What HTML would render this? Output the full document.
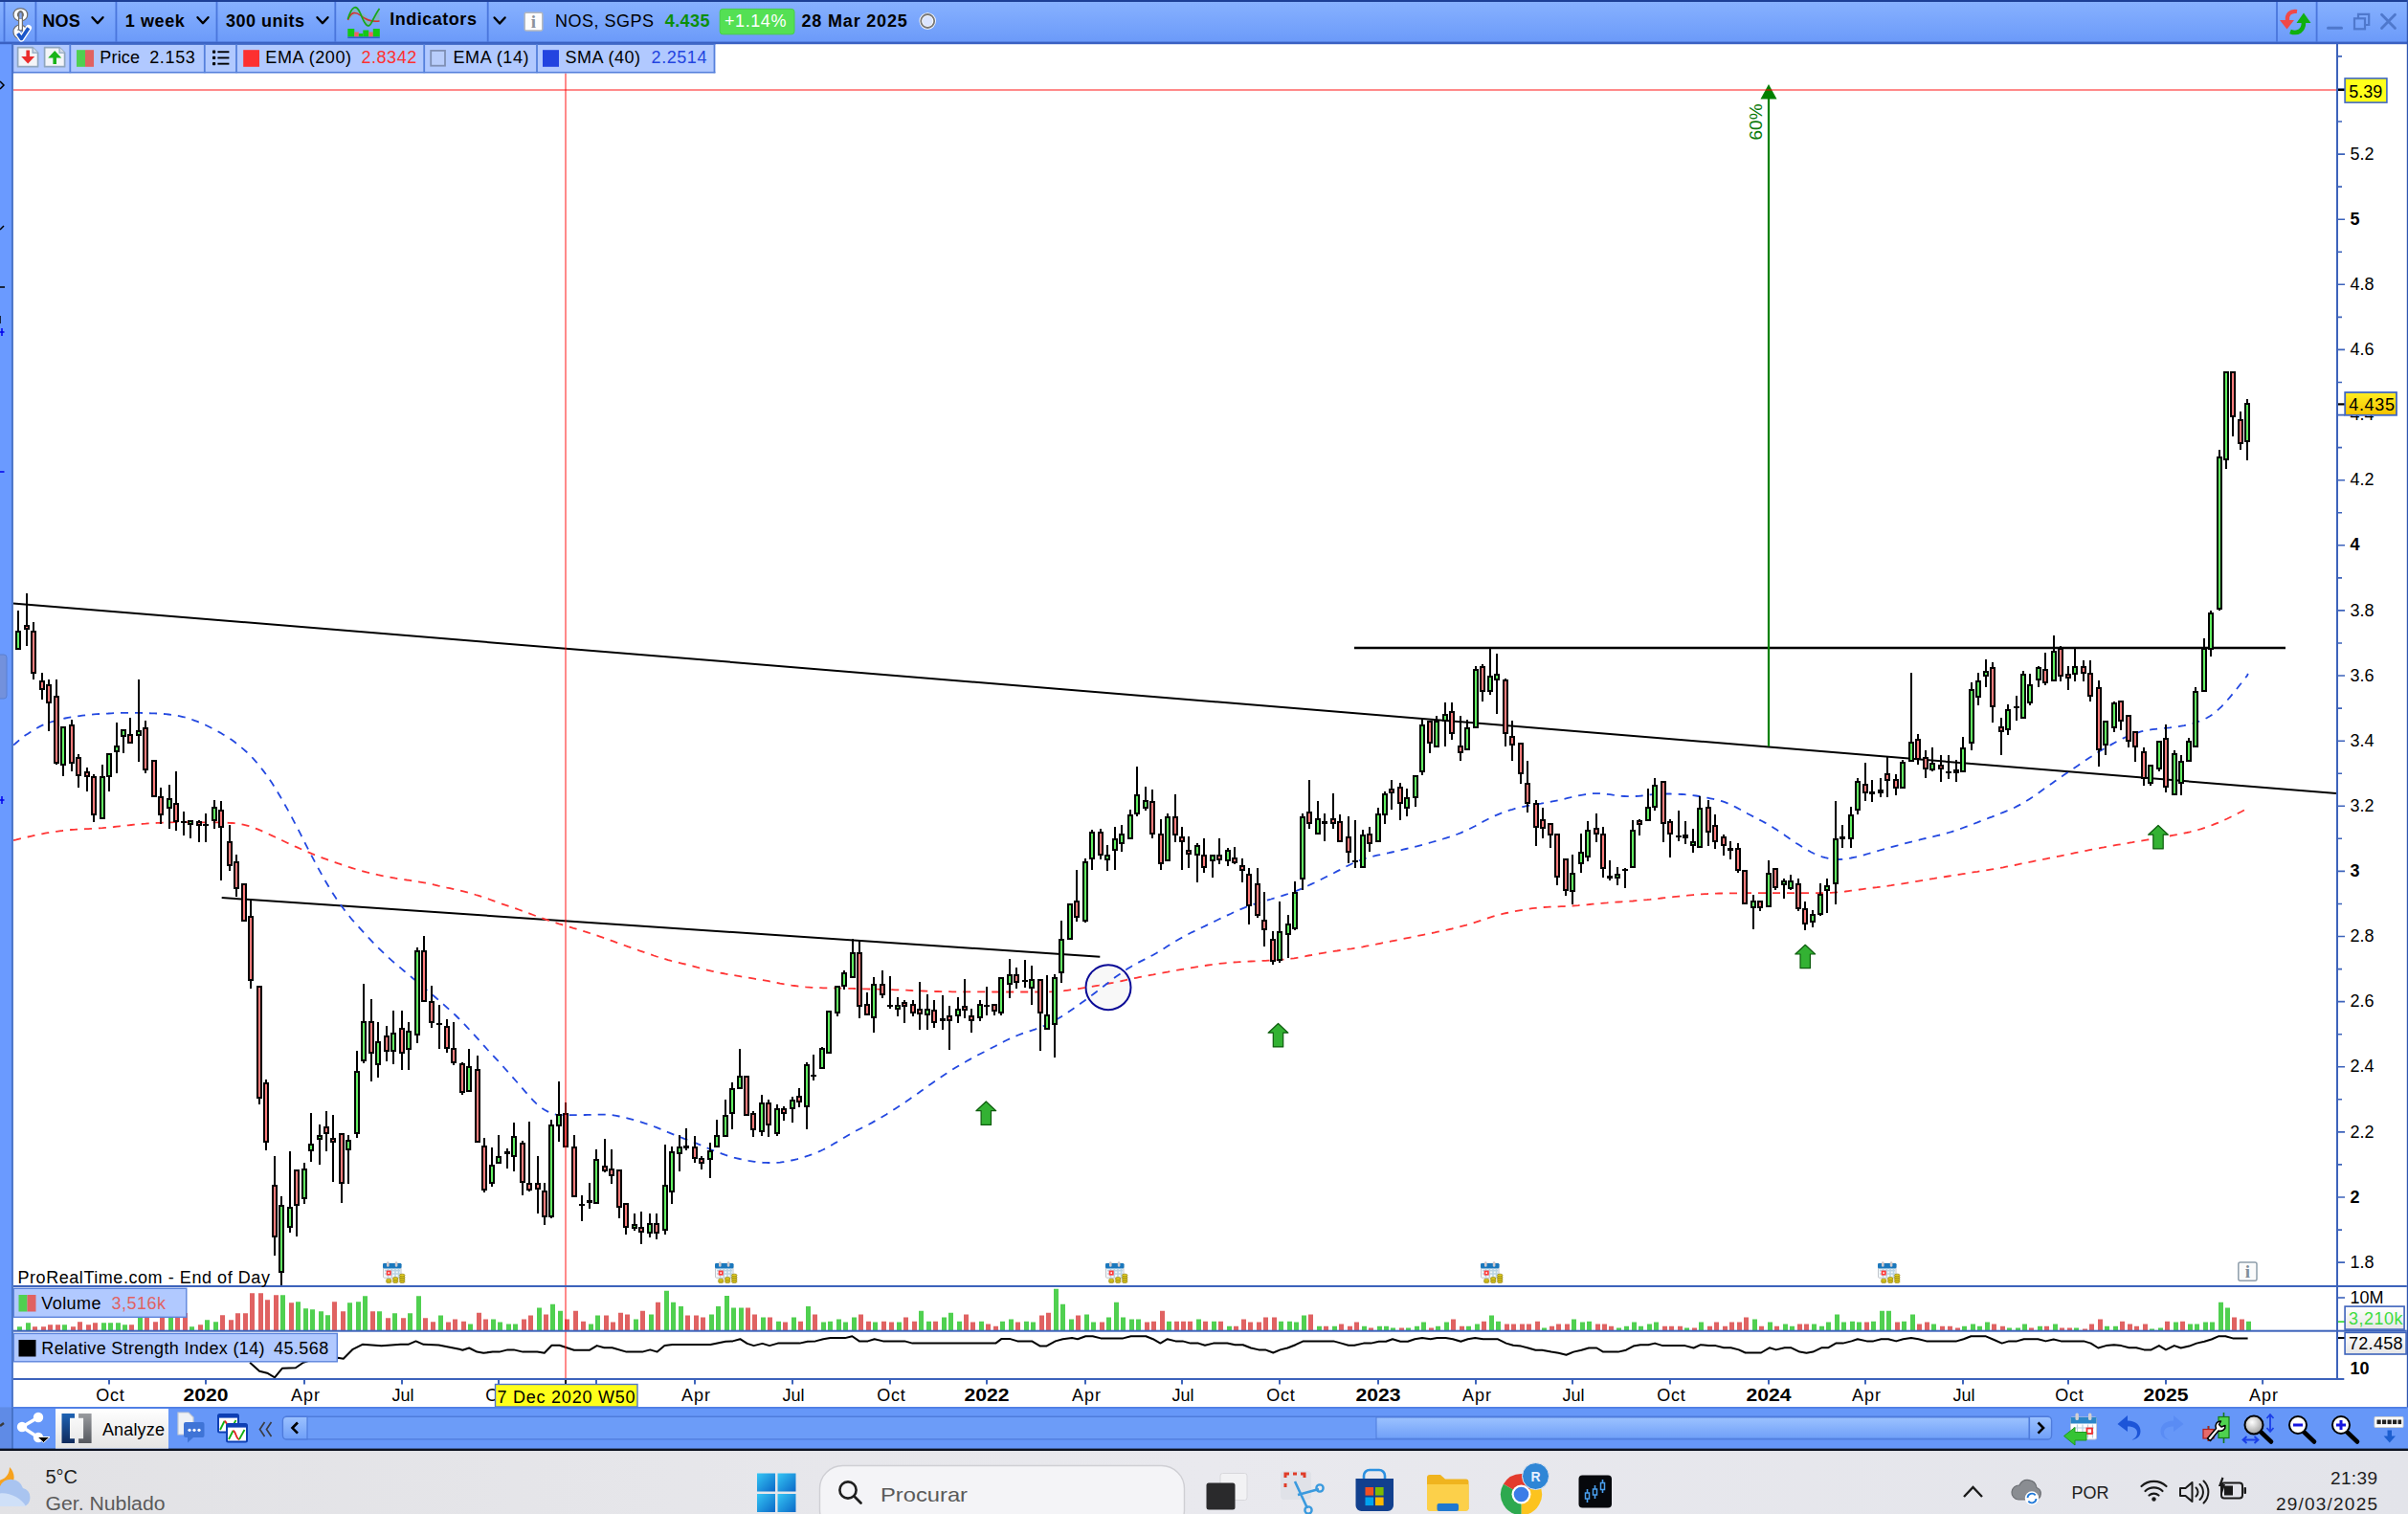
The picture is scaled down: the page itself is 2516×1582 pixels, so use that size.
<!DOCTYPE html>
<html><head><meta charset="utf-8"><title>NOS, SGPS - 1 week</title>
<style>html,body{margin:0;padding:0;background:#fff;overflow:hidden}svg{display:block}</style></head>
<body><svg width="2516" height="1582" viewBox="0 0 2516 1582">
<rect x="0" y="0" width="2516" height="1582" fill="#ffffff"/>
<defs>
<clipPath id="cpPrice"><rect x="13.8" y="46" width="2427.2" height="1297"/></clipPath>
<clipPath id="cpRsi"><rect x="13.8" y="1391.7" width="2427.2" height="48.3"/></clipPath>
<linearGradient id="gTop" x1="0" y1="0" x2="0" y2="1"><stop offset="0" stop-color="#88b2ff"/><stop offset="1" stop-color="#6a99f9"/></linearGradient>
<linearGradient id="gBtn" x1="0" y1="0" x2="0" y2="1"><stop offset="0" stop-color="#ffffff"/><stop offset="1" stop-color="#e4e4e4"/></linearGradient>
<linearGradient id="gLbl" x1="0" y1="0" x2="0" y2="1"><stop offset="0" stop-color="#ffffff"/><stop offset="1" stop-color="#e6e6e6"/></linearGradient>
<linearGradient id="gScroll" x1="0" y1="0" x2="0" y2="1"><stop offset="0" stop-color="#9cc2ff"/><stop offset="1" stop-color="#6f9ff8"/></linearGradient>
<linearGradient id="gTask" x1="0" y1="0" x2="1" y2="0"><stop offset="0" stop-color="#e2e2e5"/><stop offset="0.5" stop-color="#e9e9ee"/><stop offset="1" stop-color="#e3e4ea"/></linearGradient>
</defs>
<g clip-path="url(#cpPrice)">
<line x1="13.5" y1="630.4" x2="2442" y2="829.2" stroke="#000" stroke-width="2"/>
<line x1="231.7" y1="938.1" x2="1149.3" y2="999.8" stroke="#000" stroke-width="2"/>
<line x1="1415" y1="677" x2="2388" y2="677" stroke="#000" stroke-width="2.4"/>
<circle cx="1158" cy="1031.7" r="23.5" fill="#f8f8f8" fill-opacity="1" stroke="#0a0a96" stroke-width="2"/>
<polyline points="14.1,878.1 17.1,877.4 20.1,876.6 23.1,875.9 26.1,875.2 29.1,874.5 32.1,873.8 35.1,873.1 38.1,872.5 41.1,871.9 44.1,871.3 47.1,870.7 50.1,870.2 53.1,869.7 56.1,869.2 59.1,868.8 62.1,868.3 65.1,868.0 68.1,867.6 71.1,867.3 74.1,867.0 77.1,866.8 80.1,866.6 83.1,866.4 86.1,866.3 89.1,866.2 92.1,866.1 95.1,865.9 98.1,865.8 101.1,865.6 104.1,865.4 107.1,865.2 110.1,864.9 113.1,864.6 116.1,864.3 119.1,864.0 122.1,863.6 125.1,863.3 128.1,863.0 131.1,862.6 134.1,862.3 137.1,862.0 140.1,861.7 143.1,861.4 146.1,861.1 149.1,860.9 152.1,860.7 155.1,860.4 158.1,860.2 161.1,860.1 164.1,859.9 167.1,859.8 170.1,859.6 173.1,859.5 176.1,859.4 179.1,859.3 182.1,859.2 185.1,859.2 188.1,859.2 191.1,859.1 194.1,859.1 197.1,859.1 200.1,859.1 203.1,859.2 206.1,859.2 209.1,859.2 212.1,859.3 215.1,859.3 218.1,859.3 221.1,859.3 224.1,859.4 227.1,859.4 230.1,859.5 233.1,859.5 236.1,859.7 239.1,859.8 242.1,860.0 245.1,860.2 248.1,860.6 251.1,861.1 254.1,861.7 257.1,862.4 260.1,863.2 263.1,864.2 266.1,865.2 269.1,866.4 272.1,867.6 275.1,868.9 278.1,870.3 281.1,871.7 284.1,873.1 287.1,874.5 290.1,876.0 293.1,877.4 296.1,878.8 299.1,880.2 302.1,881.6 305.1,883.0 308.1,884.4 311.1,885.7 314.1,887.0 317.1,888.4 320.1,889.7 323.1,890.9 326.1,892.2 329.1,893.4 332.1,894.6 335.1,895.7 338.1,896.8 341.1,897.9 344.1,899.0 347.1,900.1 350.1,901.1 353.1,902.2 356.1,903.2 359.1,904.2 362.1,905.2 365.1,906.2 368.1,907.1 371.1,908.0 374.1,908.9 377.1,909.8 380.1,910.6 383.1,911.4 386.1,912.1 389.1,912.8 392.1,913.5 395.1,914.2 398.1,914.8 401.1,915.4 404.1,916.0 407.1,916.6 410.1,917.1 413.1,917.7 416.1,918.2 419.1,918.6 422.1,919.0 425.1,919.5 428.1,919.9 431.1,920.4 434.1,920.9 437.1,921.3 440.1,921.8 443.1,922.3 446.1,922.9 449.1,923.5 452.1,924.2 455.1,924.9 458.1,925.6 461.1,926.2 464.1,926.9 467.1,927.6 470.1,928.2 473.1,928.9 476.1,929.6 479.1,930.2 482.1,930.9 485.1,931.6 488.1,932.4 491.1,933.2 494.1,934.0 497.1,935.0 500.1,935.9 503.1,936.9 506.1,937.9 509.1,938.9 512.1,940.0 515.1,941.1 518.1,942.2 521.1,943.2 524.1,944.3 527.1,945.3 530.1,946.3 533.1,947.3 536.1,948.4 539.1,949.4 542.1,950.5 545.1,951.6 548.1,952.7 551.1,953.8 554.1,954.9 557.1,956.0 560.1,957.1 563.1,958.2 566.1,959.3 569.1,960.4 572.1,961.4 575.1,962.4 578.1,963.4 581.1,964.3 584.1,965.3 587.1,966.2 590.1,967.1 593.1,968.0 596.1,968.9 599.1,969.8 602.1,970.6 605.1,971.5 608.1,972.4 611.1,973.4 614.1,974.3 617.1,975.3 620.1,976.3 623.1,977.3 626.1,978.3 629.1,979.3 632.1,980.4 635.1,981.5 638.1,982.6 641.1,983.7 644.1,984.8 647.1,985.9 650.1,987.0 653.1,988.0 656.1,989.1 659.1,990.1 662.1,991.2 665.1,992.2 668.1,993.3 671.1,994.3 674.1,995.4 677.1,996.4 680.1,997.4 683.1,998.5 686.1,999.5 689.1,1000.4 692.1,1001.3 695.1,1002.2 698.1,1003.1 701.1,1003.9 704.1,1004.6 707.1,1005.4 710.1,1006.1 713.1,1006.8 716.1,1007.5 719.1,1008.2 722.1,1009.0 725.1,1009.8 728.1,1010.7 731.1,1011.5 734.1,1012.3 737.1,1013.1 740.1,1013.9 743.1,1014.6 746.1,1015.3 749.1,1015.9 752.1,1016.5 755.1,1017.0 758.1,1017.6 761.1,1018.1 764.1,1018.6 767.1,1019.2 770.1,1019.7 773.1,1020.2 776.1,1020.7 779.1,1021.2 782.1,1021.7 785.1,1022.2 788.1,1022.7 791.1,1023.2 794.1,1023.7 797.1,1024.2 800.1,1024.7 803.1,1025.2 806.1,1025.8 809.1,1026.4 812.1,1027.0 815.1,1027.6 818.1,1028.1 821.1,1028.6 824.1,1029.1 827.1,1029.6 830.1,1030.0 833.1,1030.4 836.1,1030.8 839.1,1031.1 842.1,1031.4 845.1,1031.6 848.1,1031.8 851.1,1032.0 854.1,1032.1 857.1,1032.2 860.1,1032.3 863.1,1032.4 866.1,1032.4 869.1,1032.5 872.1,1032.5 875.1,1032.6 878.1,1032.6 881.1,1032.7 884.1,1032.8 887.1,1032.8 890.1,1032.9 893.1,1033.0 896.1,1033.1 899.1,1033.2 902.1,1033.3 905.1,1033.4 908.1,1033.5 911.1,1033.5 914.1,1033.6 917.1,1033.7 920.1,1033.8 923.1,1033.9 926.1,1034.0 929.1,1034.1 932.1,1034.2 935.1,1034.3 938.1,1034.4 941.1,1034.5 944.1,1034.6 947.1,1034.7 950.1,1034.8 953.1,1035.0 956.1,1035.1 959.1,1035.2 962.1,1035.4 965.1,1035.5 968.1,1035.6 971.1,1035.8 974.1,1035.9 977.1,1036.0 980.1,1036.0 983.1,1036.1 986.1,1036.2 989.1,1036.2 992.1,1036.2 995.1,1036.3 998.1,1036.3 1001.1,1036.3 1004.1,1036.3 1007.1,1036.3 1010.1,1036.3 1013.1,1036.4 1016.1,1036.4 1019.1,1036.4 1022.1,1036.4 1025.1,1036.4 1028.1,1036.4 1031.1,1036.4 1034.1,1036.4 1037.1,1036.5 1040.1,1036.5 1043.1,1036.5 1046.1,1036.5 1049.1,1036.5 1052.1,1036.5 1055.1,1036.5 1058.1,1036.5 1061.1,1036.5 1064.1,1036.5 1067.1,1036.5 1070.1,1036.5 1073.1,1036.5 1076.1,1036.5 1079.1,1036.5 1082.1,1036.5 1085.1,1036.5 1088.1,1036.5 1091.1,1036.5 1094.1,1036.4 1097.1,1036.3 1100.1,1036.2 1103.1,1036.0 1106.1,1035.7 1109.1,1035.5 1112.1,1035.2 1115.1,1034.8 1118.1,1034.4 1121.1,1034.0 1124.1,1033.5 1127.1,1033.1 1130.1,1032.6 1133.1,1032.1 1136.1,1031.6 1139.1,1031.1 1142.1,1030.6 1145.1,1030.1 1148.1,1029.6 1151.1,1029.0 1154.1,1028.5 1157.1,1027.9 1160.1,1027.3 1163.1,1026.8 1166.1,1026.2 1169.1,1025.6 1172.1,1025.0 1175.1,1024.3 1178.1,1023.7 1181.1,1023.1 1184.1,1022.4 1187.1,1021.8 1190.1,1021.2 1193.1,1020.6 1196.1,1020.0 1199.1,1019.4 1202.1,1018.8 1205.1,1018.3 1208.1,1017.7 1211.1,1017.2 1214.1,1016.6 1217.1,1016.1 1220.1,1015.6 1223.1,1015.0 1226.1,1014.5 1229.1,1014.0 1232.1,1013.4 1235.1,1012.9 1238.1,1012.4 1241.1,1011.9 1244.1,1011.4 1247.1,1010.9 1250.1,1010.4 1253.1,1009.9 1256.1,1009.4 1259.1,1009.0 1262.1,1008.5 1265.1,1008.1 1268.1,1007.7 1271.1,1007.3 1274.1,1006.9 1277.1,1006.6 1280.1,1006.3 1283.1,1006.0 1286.1,1005.7 1289.1,1005.5 1292.1,1005.3 1295.1,1005.1 1298.1,1005.0 1301.1,1004.8 1304.1,1004.7 1307.1,1004.5 1310.1,1004.4 1313.1,1004.2 1316.1,1004.1 1319.1,1003.9 1322.1,1003.8 1325.1,1003.6 1328.1,1003.5 1331.1,1003.3 1334.1,1003.2 1337.1,1003.0 1340.1,1002.7 1343.1,1002.4 1346.1,1002.1 1349.1,1001.7 1352.1,1001.3 1355.1,1000.8 1358.1,1000.3 1361.1,999.8 1364.1,999.2 1367.1,998.5 1370.1,998.0 1373.1,997.4 1376.1,996.8 1379.1,996.3 1382.1,995.8 1385.1,995.3 1388.1,994.8 1391.1,994.3 1394.1,993.9 1397.1,993.5 1400.1,993.0 1403.1,992.6 1406.1,992.2 1409.1,991.7 1412.1,991.3 1415.1,990.8 1418.1,990.3 1421.1,989.8 1424.1,989.3 1427.1,988.7 1430.1,988.2 1433.1,987.6 1436.1,987.0 1439.1,986.4 1442.1,985.8 1445.1,985.2 1448.1,984.6 1451.1,984.0 1454.1,983.4 1457.1,982.8 1460.1,982.2 1463.1,981.6 1466.1,981.0 1469.1,980.4 1472.1,979.8 1475.1,979.2 1478.1,978.6 1481.1,978.0 1484.1,977.4 1487.1,976.8 1490.1,976.2 1493.1,975.6 1496.1,975.0 1499.1,974.4 1502.1,973.7 1505.1,973.1 1508.1,972.4 1511.1,971.8 1514.1,971.1 1517.1,970.5 1520.1,969.8 1523.1,969.0 1526.1,968.2 1529.1,967.4 1532.1,966.6 1535.1,965.7 1538.1,964.8 1541.1,963.8 1544.1,962.8 1547.1,961.8 1550.1,960.8 1553.1,959.8 1556.1,958.8 1559.1,957.9 1562.1,957.0 1565.1,956.2 1568.1,955.4 1571.1,954.7 1574.1,954.0 1577.1,953.3 1580.1,952.7 1583.1,952.1 1586.1,951.6 1589.1,951.1 1592.1,950.6 1595.1,950.1 1598.1,949.6 1601.1,949.2 1604.1,948.9 1607.1,948.6 1610.1,948.3 1613.1,948.0 1616.1,947.8 1619.1,947.7 1622.1,947.6 1625.1,947.5 1628.1,947.3 1631.1,947.2 1634.1,947.1 1637.1,946.9 1640.1,946.7 1643.1,946.5 1646.1,946.3 1649.1,946.1 1652.1,945.8 1655.1,945.5 1658.1,945.3 1661.1,945.0 1664.1,944.7 1667.1,944.4 1670.1,944.1 1673.1,943.9 1676.1,943.6 1679.1,943.4 1682.1,943.1 1685.1,942.9 1688.1,942.7 1691.1,942.5 1694.1,942.3 1697.1,942.1 1700.1,941.9 1703.1,941.7 1706.1,941.5 1709.1,941.2 1712.1,941.0 1715.1,940.7 1718.1,940.4 1721.1,940.2 1724.1,939.9 1727.1,939.5 1730.1,939.2 1733.1,938.9 1736.1,938.5 1739.1,938.2 1742.1,937.9 1745.1,937.5 1748.1,937.2 1751.1,936.9 1754.1,936.6 1757.1,936.3 1760.1,936.0 1763.1,935.7 1766.1,935.4 1769.1,935.1 1772.1,934.8 1775.1,934.6 1778.1,934.3 1781.1,934.1 1784.1,934.0 1787.1,933.8 1790.1,933.7 1793.1,933.6 1796.1,933.5 1799.1,933.5 1802.1,933.4 1805.1,933.4 1808.1,933.3 1811.1,933.3 1814.1,933.3 1817.1,933.3 1820.1,933.2 1823.1,933.2 1826.1,933.2 1829.1,933.2 1832.1,933.2 1835.1,933.2 1838.1,933.2 1841.1,933.2 1844.1,933.2 1847.1,933.2 1850.1,933.2 1853.1,933.2 1856.1,933.2 1859.1,933.2 1862.1,933.2 1865.1,933.2 1868.1,933.2 1871.1,933.2 1874.1,933.2 1877.1,933.2 1880.1,933.2 1883.1,933.2 1886.1,933.2 1889.1,933.2 1892.1,933.2 1895.1,933.2 1898.1,933.2 1901.1,933.2 1904.1,933.2 1907.1,933.1 1910.1,933.0 1913.1,932.8 1916.1,932.6 1919.1,932.4 1922.1,932.1 1925.1,931.8 1928.1,931.5 1931.1,931.1 1934.1,930.7 1937.1,930.3 1940.1,929.9 1943.1,929.5 1946.1,929.1 1949.1,928.7 1952.1,928.3 1955.1,927.9 1958.1,927.5 1961.1,927.2 1964.1,926.8 1967.1,926.4 1970.1,926.0 1973.1,925.6 1976.1,925.2 1979.1,924.7 1982.1,924.3 1985.1,923.8 1988.1,923.3 1991.1,922.8 1994.1,922.3 1997.1,921.8 2000.1,921.3 2003.1,920.8 2006.1,920.3 2009.1,919.8 2012.1,919.3 2015.1,918.8 2018.1,918.3 2021.1,917.9 2024.1,917.4 2027.1,916.9 2030.1,916.5 2033.1,916.0 2036.1,915.5 2039.1,915.0 2042.1,914.6 2045.1,914.1 2048.1,913.6 2051.1,913.1 2054.1,912.7 2057.1,912.2 2060.1,911.7 2063.1,911.2 2066.1,910.8 2069.1,910.3 2072.1,909.8 2075.1,909.4 2078.1,908.9 2081.1,908.4 2084.1,907.9 2087.1,907.3 2090.1,906.8 2093.1,906.3 2096.1,905.7 2099.1,905.1 2102.1,904.5 2105.1,904.0 2108.1,903.3 2111.1,902.7 2114.1,902.1 2117.1,901.5 2120.1,900.9 2123.1,900.3 2126.1,899.7 2129.1,899.1 2132.1,898.5 2135.1,897.9 2138.1,897.3 2141.1,896.7 2144.1,896.1 2147.1,895.5 2150.1,894.9 2153.1,894.3 2156.1,893.7 2159.1,893.0 2162.1,892.4 2165.1,891.8 2168.1,891.2 2171.1,890.6 2174.1,890.0 2177.1,889.4 2180.1,888.8 2183.1,888.2 2186.1,887.6 2189.1,887.1 2192.1,886.5 2195.1,885.9 2198.1,885.4 2201.1,884.8 2204.1,884.3 2207.1,883.8 2210.1,883.2 2213.1,882.7 2216.1,882.2 2219.1,881.7 2222.1,881.2 2225.1,880.7 2228.1,880.2 2231.1,879.6 2234.1,879.1 2237.1,878.6 2240.1,878.1 2243.1,877.6 2246.1,877.1 2249.1,876.6 2252.1,876.0 2255.1,875.5 2258.1,875.0 2261.1,874.5 2264.1,874.0 2267.1,873.5 2270.1,872.9 2273.1,872.4 2276.1,871.9 2279.1,871.3 2282.1,870.6 2285.1,870.0 2288.1,869.3 2291.1,868.5 2294.1,867.8 2297.1,867.0 2300.1,866.1 2303.1,865.1 2306.1,864.1 2309.1,863.0 2312.1,861.9 2315.1,860.7 2318.1,859.5 2321.1,858.2 2324.1,856.9 2327.1,855.5 2330.1,854.0 2333.1,852.5 2336.1,851.0 2339.1,849.5 2342.1,848.0 2345.1,846.4 2348.1,844.8 2348.8,843.9" fill="none" stroke="#ff3535" stroke-width="1.8" stroke-dasharray="8 7"/>
<polyline points="14.1,778.6 17.1,776.0 20.1,773.4 23.1,770.8 26.1,768.5 29.1,766.7 32.1,764.7 35.1,762.8 38.1,761.0 41.1,759.4 44.1,757.9 47.1,756.6 50.1,755.5 53.1,754.5 56.1,753.6 59.1,752.7 62.1,751.9 65.1,751.2 68.1,750.5 71.1,749.9 74.1,749.4 77.1,748.9 80.1,748.5 83.1,748.1 86.1,747.7 89.1,747.3 92.1,747.0 95.1,746.7 98.1,746.4 101.1,746.2 104.1,746.0 107.1,745.8 110.1,745.6 113.1,745.5 116.1,745.3 119.1,745.2 122.1,745.1 125.1,745.0 128.1,744.9 131.1,744.9 134.1,744.8 137.1,744.8 140.1,744.8 143.1,744.9 146.1,744.9 149.1,745.0 152.1,745.1 155.1,745.2 158.1,745.3 161.1,745.4 164.1,745.5 167.1,745.7 170.1,745.9 173.1,746.2 176.1,746.5 179.1,746.8 182.1,747.2 185.1,747.7 188.1,748.3 191.1,749.0 194.1,749.8 197.1,750.7 200.1,751.7 203.1,752.8 206.1,753.9 209.1,755.1 212.1,756.4 215.1,757.8 218.1,759.2 221.1,760.7 224.1,762.3 227.1,763.9 230.1,765.6 233.1,767.4 236.1,769.2 239.1,771.1 242.1,773.1 245.1,775.3 248.1,777.6 251.1,780.1 254.1,782.6 257.1,785.2 260.1,787.9 263.1,791.0 266.1,794.3 269.1,797.8 272.1,801.5 275.1,805.4 278.1,809.4 281.1,813.7 284.1,818.1 287.1,822.8 290.1,827.7 293.1,832.8 296.1,838.1 299.1,843.4 302.1,848.8 305.1,854.4 308.1,860.1 311.1,865.8 314.1,871.7 317.1,877.8 320.1,883.7 323.1,889.5 326.1,895.2 329.1,900.9 332.1,906.4 335.1,911.9 338.1,917.3 341.1,922.5 344.1,927.6 347.1,932.5 350.1,937.0 353.1,941.5 356.1,945.7 359.1,949.8 362.1,953.8 365.1,957.5 368.1,961.2 371.1,964.6 374.1,967.9 377.1,971.2 380.1,974.4 383.1,977.7 386.1,980.9 389.1,984.1 392.1,987.2 395.1,990.2 398.1,993.1 401.1,996.0 404.1,998.8 407.1,1001.6 410.1,1004.3 413.1,1006.9 416.1,1009.4 419.1,1011.9 422.1,1014.5 425.1,1017.0 428.1,1019.5 431.1,1022.0 434.1,1024.5 437.1,1027.1 440.1,1029.6 443.1,1032.1 446.1,1034.6 449.1,1037.2 452.1,1039.7 455.1,1042.3 458.1,1044.9 461.1,1047.5 464.1,1050.1 467.1,1052.8 470.1,1055.4 473.1,1058.2 476.1,1061.0 479.1,1064.0 482.1,1067.0 485.1,1070.1 488.1,1073.3 491.1,1076.5 494.1,1079.8 497.1,1083.1 500.1,1086.4 503.1,1089.8 506.1,1093.1 509.1,1096.5 512.1,1099.7 515.1,1103.0 518.1,1106.2 521.1,1109.4 524.1,1112.7 527.1,1116.0 530.1,1119.3 533.1,1122.7 536.1,1126.1 539.1,1129.5 542.1,1132.9 545.1,1136.4 548.1,1139.8 551.1,1143.3 554.1,1146.7 557.1,1149.9 560.1,1152.9 563.1,1155.5 566.1,1157.8 569.1,1159.8 572.1,1161.4 575.1,1162.8 578.1,1163.8 581.1,1164.6 584.1,1165.1 587.1,1165.2 590.1,1165.3 593.1,1165.3 596.1,1165.2 599.1,1165.2 602.1,1165.2 605.1,1165.1 608.1,1165.1 611.1,1165.0 614.1,1164.9 617.1,1164.9 620.1,1164.8 623.1,1164.7 626.1,1164.7 629.1,1164.7 632.1,1164.7 635.1,1164.8 638.1,1165.0 641.1,1165.4 644.1,1165.9 647.1,1166.5 650.1,1167.1 653.1,1167.8 656.1,1168.6 659.1,1169.4 662.1,1170.2 665.1,1171.1 668.1,1172.0 671.1,1172.9 674.1,1173.9 677.1,1174.8 680.1,1175.9 683.1,1177.0 686.1,1178.1 689.1,1179.3 692.1,1180.6 695.1,1181.9 698.1,1183.2 701.1,1184.4 704.1,1185.6 707.1,1186.8 710.1,1188.0 713.1,1189.1 716.1,1190.3 719.1,1191.4 722.1,1192.5 725.1,1193.7 728.1,1194.9 731.1,1196.1 734.1,1197.4 737.1,1198.7 740.1,1200.0 743.1,1201.3 746.1,1202.5 749.1,1203.6 752.1,1204.8 755.1,1205.8 758.1,1206.9 761.1,1207.8 764.1,1208.8 767.1,1209.6 770.1,1210.3 773.1,1211.0 776.1,1211.6 779.1,1212.2 782.1,1212.8 785.1,1213.3 788.1,1213.8 791.1,1214.2 794.1,1214.5 797.1,1214.8 800.1,1214.9 803.1,1215.0 806.1,1215.0 809.1,1214.9 812.1,1214.8 815.1,1214.6 818.1,1214.2 821.1,1213.8 824.1,1213.2 827.1,1212.5 830.1,1211.8 833.1,1211.1 836.1,1210.3 839.1,1209.4 842.1,1208.4 845.1,1207.4 848.1,1206.3 851.1,1205.2 854.1,1204.0 857.1,1202.7 860.1,1201.3 863.1,1199.8 866.1,1198.1 869.1,1196.4 872.1,1194.6 875.1,1192.9 878.1,1191.1 881.1,1189.3 884.1,1187.5 887.1,1185.7 890.1,1183.9 893.1,1182.3 896.1,1180.7 899.1,1179.2 902.1,1177.8 905.1,1176.2 908.1,1174.7 911.1,1173.1 914.1,1171.4 917.1,1169.7 920.1,1168.0 923.1,1166.2 926.1,1164.4 929.1,1162.5 932.1,1160.6 935.1,1158.7 938.1,1156.8 941.1,1154.8 944.1,1152.8 947.1,1150.8 950.1,1148.7 953.1,1146.6 956.1,1144.5 959.1,1142.4 962.1,1140.2 965.1,1138.1 968.1,1135.9 971.1,1133.8 974.1,1131.7 977.1,1129.6 980.1,1127.6 983.1,1125.5 986.1,1123.5 989.1,1121.6 992.1,1119.6 995.1,1117.7 998.1,1115.8 1001.1,1114.0 1004.1,1112.2 1007.1,1110.5 1010.1,1108.8 1013.1,1107.1 1016.1,1105.4 1019.1,1103.8 1022.1,1102.2 1025.1,1100.7 1028.1,1099.2 1031.1,1097.6 1034.1,1096.1 1037.1,1094.5 1040.1,1093.0 1043.1,1091.4 1046.1,1089.9 1049.1,1088.3 1052.1,1086.8 1055.1,1085.4 1058.1,1084.0 1061.1,1082.7 1064.1,1081.5 1067.1,1080.4 1070.1,1079.3 1073.1,1078.3 1076.1,1077.3 1079.1,1076.3 1082.1,1075.3 1085.1,1074.2 1088.1,1073.1 1091.1,1071.9 1094.1,1070.5 1097.1,1069.1 1100.1,1067.5 1103.1,1065.9 1106.1,1064.1 1109.1,1062.2 1112.1,1060.3 1115.1,1058.3 1118.1,1056.3 1121.1,1054.2 1124.1,1052.1 1127.1,1050.0 1130.1,1047.8 1133.1,1045.7 1136.1,1043.5 1139.1,1041.2 1142.1,1039.0 1145.1,1036.7 1148.1,1034.5 1151.1,1032.2 1154.1,1029.8 1157.1,1027.5 1160.1,1025.2 1163.1,1022.8 1166.1,1020.5 1169.1,1018.4 1172.1,1016.3 1175.1,1014.2 1178.1,1012.3 1181.1,1010.4 1184.1,1008.7 1187.1,1007.0 1190.1,1005.4 1193.1,1003.9 1196.1,1002.4 1199.1,1000.9 1202.1,999.3 1205.1,997.7 1208.1,996.0 1211.1,994.2 1214.1,992.3 1217.1,990.5 1220.1,988.6 1223.1,986.8 1226.1,984.9 1229.1,983.1 1232.1,981.3 1235.1,979.6 1238.1,978.0 1241.1,976.4 1244.1,974.8 1247.1,973.4 1250.1,971.9 1253.1,970.5 1256.1,969.0 1259.1,967.6 1262.1,966.1 1265.1,964.7 1268.1,963.2 1271.1,961.8 1274.1,960.3 1277.1,958.9 1280.1,957.5 1283.1,956.1 1286.1,954.7 1289.1,953.2 1292.1,951.9 1295.1,950.6 1298.1,949.3 1301.1,948.1 1304.1,947.0 1307.1,945.9 1310.1,944.8 1313.1,943.8 1316.1,942.9 1319.1,942.0 1322.1,941.2 1325.1,940.3 1328.1,939.5 1331.1,938.6 1334.1,937.8 1337.1,936.9 1340.1,935.9 1343.1,934.9 1346.1,933.9 1349.1,932.9 1352.1,931.8 1355.1,930.6 1358.1,929.4 1361.1,928.1 1364.1,926.7 1367.1,925.3 1370.1,923.9 1373.1,922.5 1376.1,921.0 1379.1,919.5 1382.1,918.0 1385.1,916.5 1388.1,915.0 1391.1,913.5 1394.1,912.0 1397.1,910.4 1400.1,908.9 1403.1,907.3 1406.1,905.7 1409.1,904.2 1412.1,902.7 1415.1,901.4 1418.1,900.1 1421.1,898.9 1424.1,897.8 1427.1,896.8 1430.1,895.9 1433.1,895.1 1436.1,894.3 1439.1,893.7 1442.1,893.1 1445.1,892.4 1448.1,891.8 1451.1,891.2 1454.1,890.5 1457.1,889.8 1460.1,889.1 1463.1,888.5 1466.1,887.7 1469.1,887.0 1472.1,886.3 1475.1,885.6 1478.1,884.8 1481.1,884.1 1484.1,883.3 1487.1,882.5 1490.1,881.7 1493.1,880.9 1496.1,880.0 1499.1,879.2 1502.1,878.3 1505.1,877.4 1508.1,876.5 1511.1,875.6 1514.1,874.7 1517.1,873.7 1520.1,872.6 1523.1,871.5 1526.1,870.3 1529.1,869.0 1532.1,867.7 1535.1,866.3 1538.1,864.8 1541.1,863.3 1544.1,861.7 1547.1,860.0 1550.1,858.3 1553.1,856.7 1556.1,855.2 1559.1,853.8 1562.1,852.4 1565.1,851.1 1568.1,849.9 1571.1,848.7 1574.1,847.6 1577.1,846.6 1580.1,845.8 1583.1,844.9 1586.1,844.2 1589.1,843.5 1592.1,842.8 1595.1,842.1 1598.1,841.6 1601.1,841.0 1604.1,840.5 1607.1,840.0 1610.1,839.6 1613.1,839.1 1616.1,838.6 1619.1,838.0 1622.1,837.4 1625.1,836.8 1628.1,836.2 1631.1,835.6 1634.1,834.9 1637.1,834.2 1640.1,833.5 1643.1,832.7 1646.1,832.0 1649.1,831.4 1652.1,830.8 1655.1,830.3 1658.1,829.8 1661.1,829.4 1664.1,829.2 1667.1,829.1 1670.1,829.1 1673.1,829.2 1676.1,829.4 1679.1,829.8 1682.1,830.2 1685.1,830.7 1688.1,831.1 1691.1,831.5 1694.1,831.8 1697.1,832.0 1700.1,832.2 1703.1,832.2 1706.1,832.2 1709.1,832.0 1712.1,831.8 1715.1,831.5 1718.1,831.1 1721.1,830.7 1724.1,830.4 1727.1,830.2 1730.1,830.0 1733.1,829.8 1736.1,829.7 1739.1,829.6 1742.1,829.5 1745.1,829.5 1748.1,829.6 1751.1,829.7 1754.1,829.8 1757.1,830.0 1760.1,830.2 1763.1,830.4 1766.1,830.8 1769.1,831.1 1772.1,831.5 1775.1,832.0 1778.1,832.5 1781.1,833.1 1784.1,833.7 1787.1,834.3 1790.1,834.9 1793.1,835.5 1796.1,836.3 1799.1,837.2 1802.1,838.2 1805.1,839.4 1808.1,840.8 1811.1,842.2 1814.1,843.6 1817.1,845.2 1820.1,846.8 1823.1,848.4 1826.1,850.2 1829.1,851.8 1832.1,853.4 1835.1,854.9 1838.1,856.5 1841.1,858.0 1844.1,859.6 1847.1,861.3 1850.1,863.0 1853.1,864.9 1856.1,866.8 1859.1,868.8 1862.1,870.8 1865.1,872.9 1868.1,875.1 1871.1,877.2 1874.1,879.2 1877.1,881.2 1880.1,883.1 1883.1,885.0 1886.1,886.8 1889.1,888.5 1892.1,890.2 1895.1,891.7 1898.1,893.1 1901.1,894.2 1904.1,895.3 1907.1,896.1 1910.1,896.8 1913.1,897.4 1916.1,897.8 1919.1,898.0 1922.1,898.0 1925.1,897.8 1928.1,897.5 1931.1,897.0 1934.1,896.5 1937.1,895.9 1940.1,895.3 1943.1,894.5 1946.1,893.7 1949.1,892.9 1952.1,892.0 1955.1,891.1 1958.1,890.2 1961.1,889.4 1964.1,888.5 1967.1,887.7 1970.1,886.8 1973.1,886.0 1976.1,885.2 1979.1,884.4 1982.1,883.6 1985.1,882.8 1988.1,882.0 1991.1,881.2 1994.1,880.4 1997.1,879.7 2000.1,878.9 2003.1,878.2 2006.1,877.4 2009.1,876.7 2012.1,876.0 2015.1,875.3 2018.1,874.6 2021.1,873.9 2024.1,873.2 2027.1,872.5 2030.1,871.7 2033.1,870.9 2036.1,870.0 2039.1,869.1 2042.1,868.1 2045.1,867.1 2048.1,866.1 2051.1,865.0 2054.1,863.9 2057.1,862.8 2060.1,861.6 2063.1,860.5 2066.1,859.4 2069.1,858.2 2072.1,857.1 2075.1,855.9 2078.1,854.7 2081.1,853.6 2084.1,852.4 2087.1,851.2 2090.1,850.0 2093.1,848.8 2096.1,847.6 2099.1,846.4 2102.1,845.1 2105.1,843.7 2108.1,842.1 2111.1,840.6 2114.1,838.9 2117.1,837.1 2120.1,835.2 2123.1,833.3 2126.1,831.3 2129.1,829.1 2132.1,827.0 2135.1,824.8 2138.1,822.7 2141.1,820.5 2144.1,818.4 2147.1,816.3 2150.1,814.2 2153.1,812.1 2156.1,810.1 2159.1,808.0 2162.1,806.0 2165.1,803.9 2168.1,801.9 2171.1,799.9 2174.1,797.8 2177.1,795.8 2180.1,793.8 2183.1,791.8 2186.1,789.9 2189.1,788.0 2192.1,786.1 2195.1,784.3 2198.1,782.5 2201.1,780.8 2204.1,779.1 2207.1,777.4 2210.1,775.7 2213.1,774.1 2216.1,772.5 2219.1,771.1 2222.1,769.7 2225.1,768.4 2228.1,767.3 2231.1,766.2 2234.1,765.3 2237.1,764.4 2240.1,763.7 2243.1,763.1 2246.1,762.6 2249.1,762.2 2252.1,761.8 2255.1,761.5 2258.1,761.2 2261.1,760.9 2264.1,760.6 2267.1,760.3 2270.1,759.9 2273.1,759.6 2276.1,759.1 2279.1,758.6 2282.1,758.1 2285.1,757.5 2288.1,756.8 2291.1,756.1 2294.1,755.1 2297.1,754.0 2300.1,752.8 2303.1,751.5 2306.1,750.0 2309.1,748.2 2312.1,746.2 2315.1,743.8 2318.1,741.2 2321.1,738.3 2324.1,735.2 2327.1,731.8 2330.1,728.3 2333.1,724.7 2336.1,721.1 2339.1,717.2 2342.1,713.4 2345.1,709.5 2348.1,705.9 2348.8,703.9" fill="none" stroke="#2348e0" stroke-width="1.8" stroke-dasharray="8 7"/>
<line x1="1848" y1="100" x2="1848" y2="780" stroke="#008000" stroke-width="2.2"/>
<polygon points="1848,88 1856.5,103.5 1839.5,103.5" fill="#008000"/>
<text transform="translate(1841,146.5) rotate(-90)" font-family='"Liberation Sans", Arial, sans-serif' font-size="19" fill="#0a7a0a">60%</text>
<g shape-rendering="crispEdges">
<path d="M18 638h2V679h-2zM27 620h2V675h-2zM34 650h2V710h-2zM43 703h2V731h-2zM50 710h2V764h-2zM58 710h2V799h-2zM65 759h2V811h-2zM74 752h2V806h-2zM81 788h2V823h-2zM90 802h2V827h-2zM97 809h2V859h-2zM106 799h2V856h-2zM113 787h2V827h-2zM121 755h2V808h-2zM128 762h2V787h-2zM135 750h2V777h-2zM144 710h2V796h-2zM151 753h2V808h-2zM167 823h2V861h-2zM176 820h2V866h-2zM183 806h2V868h-2zM191 848h2V873h-2zM198 857h2V876h-2zM207 857h2V880h-2zM214 850h2V880h-2zM223 836h2V866h-2zM230 837h2V920h-2zM239 862h2V910h-2zM246 893h2V937h-2zM261 940h2V1033h-2zM270 1030h2V1154h-2zM277 1128h2V1202h-2zM286 1208h2V1312h-2zM293 1250h2V1343h-2zM302 1203h2V1288h-2zM309 1222h2V1292h-2zM317 1215h2V1258h-2zM324 1163h2V1214h-2zM333 1175h2V1217h-2zM340 1161h2V1203h-2zM347 1165h2V1235h-2zM356 1184h2V1257h-2zM363 1186h2V1237h-2zM372 1098h2V1189h-2zM379 1028h2V1111h-2zM387 1044h2V1130h-2zM394 1068h2V1126h-2zM403 1072h2V1109h-2zM410 1056h2V1112h-2zM419 1056h2V1118h-2zM426 1068h2V1118h-2zM435 990h2V1090h-2zM442 978h2V1047h-2zM450 1030h2V1074h-2zM458 1050h2V1096h-2zM466 1065h2V1100h-2zM473 1068h2V1113h-2zM482 1110h2V1144h-2zM489 1096h2V1141h-2zM498 1103h2V1194h-2zM505 1189h2V1246h-2zM513 1199h2V1240h-2zM520 1186h2V1216h-2zM529 1200h2V1221h-2zM536 1173h2V1224h-2zM545 1192h2V1249h-2zM552 1172h2V1245h-2zM561 1208h2V1268h-2zM568 1236h2V1280h-2zM575 1170h2V1273h-2zM583 1130h2V1193h-2zM590 1152h2V1199h-2zM599 1186h2V1251h-2zM607 1249h2V1276h-2zM615 1236h2V1263h-2zM622 1201h2V1258h-2zM631 1190h2V1225h-2zM638 1201h2V1237h-2zM646 1222h2V1273h-2zM653 1257h2V1290h-2zM662 1268h2V1286h-2zM669 1266h2V1300h-2zM678 1268h2V1293h-2zM685 1268h2V1295h-2zM694 1196h2V1290h-2zM701 1198h2V1258h-2zM709 1186h2V1224h-2zM716 1179h2V1202h-2zM725 1187h2V1215h-2zM732 1208h2V1222h-2zM741 1194h2V1231h-2zM748 1170h2V1199h-2zM757 1149h2V1188h-2zM764 1131h2V1180h-2zM772 1096h2V1138h-2zM786 1161h2V1188h-2zM795 1144h2V1187h-2zM802 1149h2V1188h-2zM811 1154h2V1187h-2zM818 1156h2V1171h-2zM827 1146h2V1173h-2zM834 1137h2V1157h-2zM842 1110h2V1180h-2zM849 1102h2V1129h-2zM858 1094h2V1117h-2zM874 1030h2V1062h-2zM881 1014h2V1034h-2zM890 981h2V1022h-2zM897 983h2V1064h-2zM905 1037h2V1061h-2zM912 1021h2V1079h-2zM921 1014h2V1043h-2zM929 1020h2V1054h-2zM937 1042h2V1062h-2zM944 1045h2V1069h-2zM953 1045h2V1062h-2zM960 1026h2V1076h-2zM968 1039h2V1076h-2zM975 1045h2V1074h-2zM984 1040h2V1076h-2zM991 1051h2V1097h-2zM1000 1042h2V1069h-2zM1007 1023h2V1064h-2zM1014 1054h2V1079h-2zM1023 1045h2V1067h-2zM1030 1031h2V1061h-2zM1038 1049h2V1061h-2zM1045 1021h2V1061h-2zM1054 1002h2V1043h-2zM1061 1011h2V1033h-2zM1070 1003h2V1032h-2zM1077 1009h2V1050h-2zM1086 1023h2V1098h-2zM1093 1019h2V1076h-2zM1101 1018h2V1105h-2zM1108 962h2V1027h-2zM1124 909h2V963h-2zM1133 897h2V964h-2zM1140 867h2V909h-2zM1149 866h2V898h-2zM1156 883h2V910h-2zM1164 864h2V909h-2zM1171 862h2V890h-2zM1180 846h2V877h-2zM1187 801h2V853h-2zM1196 822h2V847h-2zM1203 825h2V876h-2zM1212 856h2V909h-2zM1219 850h2V900h-2zM1227 830h2V880h-2zM1234 864h2V909h-2zM1241 874h2V907h-2zM1250 881h2V922h-2zM1257 876h2V912h-2zM1266 893h2V917h-2zM1273 876h2V903h-2zM1282 886h2V905h-2zM1289 885h2V903h-2zM1297 897h2V922h-2zM1304 907h2V966h-2zM1313 907h2V959h-2zM1320 932h2V989h-2zM1329 973h2V1008h-2zM1336 942h2V1006h-2zM1345 956h2V1001h-2zM1352 921h2V972h-2zM1360 850h2V930h-2zM1367 815h2V866h-2zM1376 837h2V872h-2zM1383 850h2V879h-2zM1392 829h2V866h-2zM1399 851h2V880h-2zM1408 853h2V902h-2zM1415 857h2V907h-2zM1423 867h2V907h-2zM1430 864h2V890h-2zM1439 844h2V880h-2zM1446 827h2V861h-2zM1453 815h2V846h-2zM1462 818h2V857h-2zM1469 824h2V853h-2zM1478 810h2V843h-2zM1485 751h2V810h-2zM1493 753h2V787h-2zM1500 748h2V781h-2zM1509 734h2V780h-2zM1516 734h2V773h-2zM1525 748h2V795h-2zM1532 752h2V784h-2zM1541 696h2V761h-2zM1548 694h2V733h-2zM1556 677h2V726h-2zM1563 683h2V746h-2zM1572 709h2V780h-2zM1579 753h2V795h-2zM1588 776h2V819h-2zM1595 795h2V849h-2zM1604 836h2V884h-2zM1611 844h2V876h-2zM1619 860h2V886h-2zM1626 871h2V925h-2zM1635 897h2V936h-2zM1642 893h2V945h-2zM1651 871h2V912h-2zM1658 858h2V900h-2zM1667 850h2V880h-2zM1674 864h2V917h-2zM1681 899h2V920h-2zM1689 906h2V925h-2zM1697 907h2V928h-2zM1705 857h2V907h-2zM1712 856h2V873h-2zM1721 824h2V858h-2zM1728 813h2V847h-2zM1737 816h2V880h-2zM1744 856h2V896h-2zM1753 847h2V879h-2zM1760 858h2V882h-2zM1768 866h2V891h-2zM1775 832h2V886h-2zM1784 836h2V884h-2zM1791 851h2V887h-2zM1800 872h2V894h-2zM1807 879h2V898h-2zM1815 881h2V912h-2zM1831 935h2V971h-2zM1838 941h2V952h-2zM1847 899h2V948h-2zM1854 907h2V930h-2zM1863 918h2V939h-2zM1870 914h2V930h-2zM1878 918h2V952h-2zM1885 942h2V972h-2zM1893 951h2V969h-2zM1901 923h2V957h-2zM1908 918h2V954h-2zM1917 837h2V945h-2zM1924 862h2V886h-2zM1933 843h2V886h-2zM1940 813h2V851h-2zM1948 797h2V837h-2zM1955 815h2V838h-2zM1964 813h2V833h-2zM1971 791h2V833h-2zM1980 809h2V831h-2zM1987 794h2V824h-2zM1996 703h2V796h-2zM2003 767h2V799h-2zM2011 784h2V813h-2zM2018 781h2V806h-2zM2027 789h2V817h-2zM2035 789h2V814h-2zM2043 794h2V817h-2zM2050 770h2V807h-2zM2059 713h2V784h-2zM2066 703h2V737h-2zM2074 689h2V718h-2zM2081 692h2V755h-2zM2090 750h2V789h-2zM2097 736h2V768h-2zM2106 727h2V753h-2zM2113 701h2V751h-2zM2120 704h2V737h-2zM2129 696h2V718h-2zM2136 682h2V716h-2zM2145 664h2V712h-2zM2152 675h2V712h-2zM2160 696h2V721h-2zM2167 677h2V712h-2zM2176 690h2V712h-2zM2183 690h2V733h-2zM2192 711h2V801h-2zM2199 753h2V789h-2zM2208 733h2V765h-2zM2215 732h2V763h-2zM2223 747h2V781h-2zM2230 764h2V796h-2zM2239 781h2V821h-2zM2246 799h2V821h-2zM2255 774h2V806h-2zM2262 757h2V828h-2zM2271 784h2V831h-2zM2278 789h2V831h-2zM2286 771h2V796h-2zM2293 718h2V781h-2zM2302 667h2V723h-2zM2309 638h2V686h-2zM2318 470h2V638h-2zM2325 388h2V490h-2zM2332 388h2V456h-2zM2340 430h2V470h-2zM2347 417h2V481h-2z" fill="#000"/>
<path d="M16 659h6V679h-6zM25 653h6V658h-6zM32 659h6V704h-6zM41 711h6V721h-6zM48 715h6V735h-6zM56 727h6V798h-6zM63 759h6V800h-6zM72 757h6V798h-6zM79 791h6V811h-6zM88 806h6V812h-6zM95 811h6V852h-6zM104 811h6V856h-6zM111 787h6V812h-6zM119 779h6V786h-6zM126 762h6V770h-6zM133 767h6V777h-6zM142 763h6V769h-6zM149 760h6V805h-6zM158 794h6V833h-6zM165 832h6V852h-6zM174 834h6V845h-6zM181 839h6V859h-6zM189 858h6V860h-6zM196 857h6V862h-6zM205 858h6V863h-6zM212 861h6V863h-6zM221 843h6V858h-6zM228 846h6V865h-6zM237 879h6V905h-6zM244 900h6V929h-6zM252 923h6V963h-6zM259 957h6V1025h-6zM268 1030h6V1148h-6zM275 1131h6V1194h-6zM284 1238h6V1293h-6zM291 1259h6V1330h-6zM300 1261h6V1283h-6zM307 1222h6V1260h-6zM315 1221h6V1253h-6zM322 1195h6V1203h-6zM331 1186h6V1191h-6zM338 1177h6V1185h-6zM345 1189h6V1194h-6zM354 1184h6V1237h-6zM361 1191h6V1202h-6zM370 1119h6V1185h-6zM377 1067h6V1109h-6zM385 1067h6V1101h-6zM392 1088h6V1113h-6zM401 1082h6V1099h-6zM408 1079h6V1099h-6zM417 1074h6V1101h-6zM424 1077h6V1097h-6zM433 993h6V1082h-6zM440 993h6V1047h-6zM448 1046h6V1069h-6zM456 1069h6V1071h-6zM464 1072h6V1096h-6zM471 1095h6V1111h-6zM480 1111h6V1142h-6zM487 1114h6V1141h-6zM496 1117h6V1194h-6zM503 1197h6V1244h-6zM511 1217h6V1237h-6zM518 1208h6V1216h-6zM527 1203h6V1206h-6zM534 1187h6V1209h-6zM543 1194h6V1236h-6zM550 1236h6V1244h-6zM559 1236h6V1243h-6zM566 1244h6V1272h-6zM573 1175h6V1272h-6zM581 1164h6V1177h-6zM588 1163h6V1199h-6zM597 1198h6V1251h-6zM605 1258h6V1260h-6zM613 1254h6V1257h-6zM620 1211h6V1258h-6zM629 1218h6V1224h-6zM636 1221h6V1229h-6zM644 1222h6V1262h-6zM651 1257h6V1283h-6zM660 1279h6V1284h-6zM667 1282h6V1288h-6zM676 1278h6V1289h-6zM683 1278h6V1289h-6zM692 1238h6V1286h-6zM699 1203h6V1246h-6zM707 1198h6V1206h-6zM714 1197h6V1200h-6zM723 1198h6V1211h-6zM730 1210h6V1216h-6zM739 1202h6V1212h-6zM746 1186h6V1199h-6zM755 1165h6V1188h-6zM762 1137h6V1164h-6zM770 1124h6V1138h-6zM777 1124h6V1166h-6zM784 1163h6V1181h-6zM793 1152h6V1183h-6zM800 1152h6V1176h-6zM809 1158h6V1185h-6zM816 1158h6V1164h-6zM825 1149h6V1159h-6zM832 1145h6V1152h-6zM840 1112h6V1157h-6zM847 1123h6V1125h-6zM856 1095h6V1117h-6zM863 1056h6V1101h-6zM872 1030h6V1059h-6zM879 1016h6V1031h-6zM888 995h6V1022h-6zM895 995h6V1052h-6zM903 1049h6V1061h-6zM910 1028h6V1064h-6zM919 1028h6V1040h-6zM927 1050h6V1052h-6zM935 1050h6V1055h-6zM942 1047h6V1052h-6zM951 1049h6V1059h-6zM958 1054h6V1060h-6zM966 1054h6V1061h-6zM973 1055h6V1069h-6zM982 1064h6V1067h-6zM989 1061h6V1067h-6zM998 1054h6V1062h-6zM1005 1051h6V1056h-6zM1012 1061h6V1067h-6zM1021 1049h6V1064h-6zM1028 1050h6V1052h-6zM1036 1049h6V1057h-6zM1043 1021h6V1059h-6zM1052 1018h6V1029h-6zM1059 1018h6V1027h-6zM1068 1024h6V1026h-6zM1075 1023h6V1033h-6zM1084 1023h6V1059h-6zM1091 1060h6V1076h-6zM1099 1021h6V1071h-6zM1106 981h6V1017h-6zM1115 944h6V982h-6zM1122 941h6V959h-6zM1131 900h6V963h-6zM1138 869h6V898h-6zM1147 869h6V894h-6zM1154 893h6V899h-6zM1162 876h6V889h-6zM1169 871h6V882h-6zM1178 851h6V877h-6zM1185 830h6V851h-6zM1194 836h6V845h-6zM1201 837h6V872h-6zM1210 871h6V903h-6zM1217 853h6V900h-6zM1225 853h6V873h-6zM1232 874h6V880h-6zM1239 888h6V893h-6zM1248 883h6V894h-6zM1255 893h6V907h-6zM1264 893h6V900h-6zM1271 893h6V899h-6zM1280 888h6V900h-6zM1287 896h6V902h-6zM1295 904h6V910h-6zM1302 913h6V947h-6zM1311 923h6V957h-6zM1318 961h6V972h-6zM1327 981h6V1005h-6zM1334 973h6V1004h-6zM1343 965h6V977h-6zM1350 932h6V971h-6zM1358 853h6V919h-6zM1365 848h6V861h-6zM1374 855h6V872h-6zM1381 858h6V861h-6zM1390 855h6V861h-6zM1397 858h6V880h-6zM1406 874h6V891h-6zM1413 899h6V901h-6zM1421 872h6V907h-6zM1428 871h6V882h-6zM1437 850h6V880h-6zM1444 829h6V852h-6zM1451 824h6V829h-6zM1460 822h6V840h-6zM1467 833h6V845h-6zM1476 810h6V834h-6zM1483 757h6V807h-6zM1491 753h6V777h-6zM1498 753h6V781h-6zM1507 746h6V754h-6zM1514 743h6V767h-6zM1523 779h6V787h-6zM1530 760h6V784h-6zM1539 699h6V761h-6zM1546 696h6V723h-6zM1554 706h6V723h-6zM1561 704h6V711h-6zM1570 710h6V767h-6zM1577 769h6V779h-6zM1586 776h6V809h-6zM1593 818h6V840h-6zM1602 839h6V865h-6zM1609 856h6V866h-6zM1617 860h6V873h-6zM1624 871h6V917h-6zM1633 897h6V931h-6zM1640 912h6V932h-6zM1649 890h6V903h-6zM1656 867h6V896h-6zM1665 865h6V872h-6zM1672 871h6V908h-6zM1679 915h6V918h-6zM1687 913h6V918h-6zM1695 908h6V910h-6zM1703 867h6V907h-6zM1710 857h6V862h-6zM1719 843h6V858h-6zM1726 820h6V844h-6zM1735 816h6V861h-6zM1742 858h6V872h-6zM1751 873h6V875h-6zM1758 872h6V876h-6zM1766 879h6V884h-6zM1773 844h6V886h-6zM1782 843h6V870h-6zM1789 862h6V880h-6zM1798 874h6V884h-6zM1805 886h6V889h-6zM1813 886h6V910h-6zM1820 909h6V945h-6zM1829 941h6V949h-6zM1836 941h6V949h-6zM1845 912h6V948h-6zM1852 907h6V928h-6zM1861 920h6V925h-6zM1868 920h6V929h-6zM1876 923h6V950h-6zM1883 949h6V966h-6zM1891 955h6V964h-6zM1899 934h6V956h-6zM1906 925h6V931h-6zM1915 876h6V924h-6zM1922 874h6V877h-6zM1931 851h6V877h-6zM1938 816h6V847h-6zM1946 819h6V829h-6zM1953 827h6V830h-6zM1962 825h6V829h-6zM1969 808h6V816h-6zM1978 814h6V824h-6zM1985 796h6V824h-6zM1994 775h6V796h-6zM2001 772h6V794h-6zM2009 791h6V804h-6zM2016 797h6V805h-6zM2025 799h6V804h-6zM2033 806h6V808h-6zM2041 804h6V808h-6zM2048 781h6V807h-6zM2057 720h6V777h-6zM2064 711h6V729h-6zM2072 701h6V707h-6zM2079 697h6V739h-6zM2088 759h6V765h-6zM2095 741h6V763h-6zM2104 738h6V740h-6zM2111 704h6V751h-6zM2118 715h6V735h-6zM2127 697h6V711h-6zM2134 699h6V714h-6zM2143 680h6V712h-6zM2150 677h6V707h-6zM2158 704h6V709h-6zM2165 696h6V705h-6zM2174 696h6V704h-6zM2181 703h6V728h-6zM2190 718h6V784h-6zM2197 753h6V779h-6zM2206 734h6V761h-6zM2213 732h6V754h-6zM2221 747h6V775h-6zM2228 764h6V781h-6zM2237 785h6V814h-6zM2244 799h6V819h-6zM2253 774h6V804h-6zM2260 771h6V823h-6zM2269 787h6V831h-6zM2276 795h6V819h-6zM2284 774h6V796h-6zM2291 722h6V781h-6zM2300 677h6V723h-6zM2307 640h6V679h-6zM2316 477h6V637h-6zM2323 388h6V481h-6zM2330 388h6V436h-6zM2338 438h6V464h-6zM2345 421h6V462h-6z" fill="#000"/>
<path d="M18 661h2V677h-2zM65 761h2V798h-2zM106 813h2V854h-2zM113 789h2V810h-2zM121 781h2V784h-2zM128 764h2V768h-2zM144 765h2V767h-2zM176 836h2V843h-2zM198 859h2V860h-2zM223 845h2V856h-2zM293 1261h2V1328h-2zM302 1263h2V1281h-2zM317 1223h2V1251h-2zM324 1197h2V1201h-2zM333 1188h2V1189h-2zM363 1193h2V1200h-2zM372 1121h2V1183h-2zM379 1069h2V1107h-2zM394 1090h2V1111h-2zM410 1081h2V1097h-2zM426 1079h2V1095h-2zM435 995h2V1080h-2zM489 1116h2V1139h-2zM513 1219h2V1235h-2zM520 1210h2V1214h-2zM536 1189h2V1207h-2zM575 1177h2V1270h-2zM583 1166h2V1175h-2zM622 1213h2V1256h-2zM662 1281h2V1282h-2zM678 1280h2V1287h-2zM694 1240h2V1284h-2zM701 1205h2V1244h-2zM709 1200h2V1204h-2zM741 1204h2V1210h-2zM748 1188h2V1197h-2zM757 1167h2V1186h-2zM764 1139h2V1162h-2zM772 1126h2V1136h-2zM795 1154h2V1181h-2zM811 1160h2V1183h-2zM827 1151h2V1157h-2zM842 1114h2V1155h-2zM858 1097h2V1115h-2zM865 1058h2V1099h-2zM874 1032h2V1057h-2zM881 1018h2V1029h-2zM890 997h2V1020h-2zM912 1030h2V1062h-2zM937 1052h2V1053h-2zM968 1056h2V1059h-2zM1000 1056h2V1060h-2zM1023 1051h2V1062h-2zM1045 1023h2V1057h-2zM1054 1020h2V1027h-2zM1077 1025h2V1031h-2zM1093 1062h2V1074h-2zM1101 1023h2V1069h-2zM1108 983h2V1015h-2zM1117 946h2V980h-2zM1133 902h2V961h-2zM1140 871h2V896h-2zM1156 895h2V897h-2zM1164 878h2V887h-2zM1171 873h2V880h-2zM1180 853h2V875h-2zM1187 832h2V849h-2zM1196 838h2V843h-2zM1219 855h2V898h-2zM1250 885h2V892h-2zM1266 895h2V898h-2zM1282 890h2V898h-2zM1336 975h2V1002h-2zM1345 967h2V975h-2zM1352 934h2V969h-2zM1360 855h2V917h-2zM1376 857h2V870h-2zM1423 874h2V905h-2zM1439 852h2V878h-2zM1446 831h2V850h-2zM1469 835h2V843h-2zM1478 812h2V832h-2zM1485 759h2V805h-2zM1500 755h2V779h-2zM1509 748h2V752h-2zM1532 762h2V782h-2zM1541 701h2V759h-2zM1556 708h2V721h-2zM1563 706h2V709h-2zM1642 914h2V930h-2zM1651 892h2V901h-2zM1658 869h2V894h-2zM1689 915h2V916h-2zM1705 869h2V905h-2zM1721 845h2V856h-2zM1728 822h2V842h-2zM1768 881h2V882h-2zM1775 846h2V884h-2zM1831 943h2V947h-2zM1847 914h2V946h-2zM1863 922h2V923h-2zM1870 922h2V927h-2zM1893 957h2V962h-2zM1901 936h2V954h-2zM1908 927h2V929h-2zM1917 878h2V922h-2zM1933 853h2V875h-2zM1940 818h2V845h-2zM1987 798h2V822h-2zM1996 777h2V794h-2zM2018 799h2V803h-2zM2050 783h2V805h-2zM2059 722h2V775h-2zM2066 713h2V727h-2zM2074 703h2V705h-2zM2097 743h2V761h-2zM2113 706h2V749h-2zM2120 717h2V733h-2zM2129 699h2V709h-2zM2145 682h2V710h-2zM2167 698h2V703h-2zM2199 755h2V777h-2zM2208 736h2V759h-2zM2246 801h2V817h-2zM2255 776h2V802h-2zM2271 789h2V829h-2zM2278 797h2V817h-2zM2286 776h2V794h-2zM2293 724h2V779h-2zM2302 679h2V721h-2zM2309 642h2V677h-2zM2318 479h2V635h-2zM2325 390h2V479h-2zM2347 423h2V460h-2z" fill="#62f062"/>
<path d="M27 655h2V656h-2zM34 661h2V702h-2zM43 713h2V719h-2zM50 717h2V733h-2zM58 729h2V796h-2zM74 759h2V796h-2zM81 793h2V809h-2zM90 808h2V810h-2zM97 813h2V850h-2zM135 769h2V775h-2zM151 762h2V803h-2zM160 796h2V831h-2zM167 834h2V850h-2zM183 841h2V857h-2zM207 860h2V861h-2zM230 848h2V863h-2zM239 881h2V903h-2zM246 902h2V927h-2zM254 925h2V961h-2zM261 959h2V1023h-2zM270 1032h2V1146h-2zM277 1133h2V1192h-2zM286 1240h2V1291h-2zM309 1224h2V1258h-2zM340 1179h2V1183h-2zM347 1191h2V1192h-2zM356 1186h2V1235h-2zM387 1069h2V1099h-2zM403 1084h2V1097h-2zM419 1076h2V1099h-2zM442 995h2V1045h-2zM450 1048h2V1067h-2zM466 1074h2V1094h-2zM473 1097h2V1109h-2zM482 1113h2V1140h-2zM498 1119h2V1192h-2zM505 1199h2V1242h-2zM545 1196h2V1234h-2zM552 1238h2V1242h-2zM561 1238h2V1241h-2zM568 1246h2V1270h-2zM590 1165h2V1197h-2zM599 1200h2V1249h-2zM631 1220h2V1222h-2zM638 1223h2V1227h-2zM646 1224h2V1260h-2zM653 1259h2V1281h-2zM669 1284h2V1286h-2zM685 1280h2V1287h-2zM725 1200h2V1209h-2zM732 1212h2V1214h-2zM779 1126h2V1164h-2zM786 1165h2V1179h-2zM802 1154h2V1174h-2zM818 1160h2V1162h-2zM834 1147h2V1150h-2zM897 997h2V1050h-2zM905 1051h2V1059h-2zM921 1030h2V1038h-2zM944 1049h2V1050h-2zM953 1051h2V1057h-2zM960 1056h2V1058h-2zM975 1057h2V1067h-2zM991 1063h2V1065h-2zM1007 1053h2V1054h-2zM1014 1063h2V1065h-2zM1038 1051h2V1055h-2zM1061 1020h2V1025h-2zM1086 1025h2V1057h-2zM1124 943h2V957h-2zM1149 871h2V892h-2zM1203 839h2V870h-2zM1212 873h2V901h-2zM1227 855h2V871h-2zM1234 876h2V878h-2zM1241 890h2V891h-2zM1257 895h2V905h-2zM1273 895h2V897h-2zM1289 898h2V900h-2zM1297 906h2V908h-2zM1304 915h2V945h-2zM1313 925h2V955h-2zM1320 963h2V970h-2zM1329 983h2V1003h-2zM1367 850h2V859h-2zM1392 857h2V859h-2zM1399 860h2V878h-2zM1408 876h2V889h-2zM1430 873h2V880h-2zM1453 826h2V827h-2zM1462 824h2V838h-2zM1493 755h2V775h-2zM1516 745h2V765h-2zM1525 781h2V785h-2zM1548 698h2V721h-2zM1572 712h2V765h-2zM1579 771h2V777h-2zM1588 778h2V807h-2zM1595 820h2V838h-2zM1604 841h2V863h-2zM1611 858h2V864h-2zM1619 862h2V871h-2zM1626 873h2V915h-2zM1635 899h2V929h-2zM1667 867h2V870h-2zM1674 873h2V906h-2zM1712 859h2V860h-2zM1737 818h2V859h-2zM1744 860h2V870h-2zM1784 845h2V868h-2zM1791 864h2V878h-2zM1800 876h2V882h-2zM1815 888h2V908h-2zM1822 911h2V943h-2zM1838 943h2V947h-2zM1854 909h2V926h-2zM1878 925h2V948h-2zM1885 951h2V964h-2zM1948 821h2V827h-2zM1971 810h2V814h-2zM1980 816h2V822h-2zM2003 774h2V792h-2zM2011 793h2V802h-2zM2027 801h2V802h-2zM2081 699h2V737h-2zM2090 761h2V763h-2zM2136 701h2V712h-2zM2152 679h2V705h-2zM2160 706h2V707h-2zM2176 698h2V702h-2zM2183 705h2V726h-2zM2192 720h2V782h-2zM2215 734h2V752h-2zM2223 749h2V773h-2zM2230 766h2V779h-2zM2239 787h2V812h-2zM2262 773h2V821h-2zM2332 390h2V434h-2zM2340 440h2V462h-2z" fill="#ff7c7c"/>
</g>
<polygon points="1030.3,1151 1040.7,1160.7 1035.5,1160.7 1035.5,1175.4 1025.1,1175.4 1025.1,1160.7 1019.9,1160.7" fill="#33b233" stroke="#0d5c0d" stroke-width="1.2" stroke-linejoin="round"/>
<polygon points="1335.5,1069.5 1345.9,1079.2 1340.7,1079.2 1340.7,1093.9 1330.3,1093.9 1330.3,1079.2 1325.1,1079.2" fill="#33b233" stroke="#0d5c0d" stroke-width="1.2" stroke-linejoin="round"/>
<polygon points="1886.2,987.3 1896.6000000000001,997.0 1891.4,997.0 1891.4,1011.6999999999999 1881.0,1011.6999999999999 1881.0,997.0 1875.8,997.0" fill="#33b233" stroke="#0d5c0d" stroke-width="1.2" stroke-linejoin="round"/>
<polygon points="2255,862.5 2265.4,872.2 2260.2,872.2 2260.2,886.9 2249.8,886.9 2249.8,872.2 2244.6,872.2" fill="#33b233" stroke="#0d5c0d" stroke-width="1.2" stroke-linejoin="round"/>
</g>
<g transform="translate(400,1318.3)"><rect x="0.5" y="2" width="18.5" height="15" rx="1.2" fill="#f4f8fb" stroke="#c2c6cc" stroke-width="1"/><rect x="0" y="1.6" width="19.5" height="5.6" rx="1.4" fill="#1b78bd"/><rect x="4" y="0" width="2.6" height="5.4" rx="1.3" fill="#cfc8cc"/><rect x="12.8" y="0" width="2.6" height="5.4" rx="1.3" fill="#cfc8cc"/><path d="M2 9.300h16M2 12.700h16M5.500 7.500v9M9.300 7.500v9M13 7.500v9M16.500 7.500v9" stroke="#b9d3e4" stroke-width="1.6"/><rect x="3.7" y="9.3" width="5" height="5" fill="#ff3b3b"/><rect x="5.4" y="11" width="1.6" height="1.6" fill="#fff"/><g fill="#e6d21e" stroke="#8a7a10" stroke-width="0.7"><ellipse cx="6.2" cy="21" rx="2.8" ry="1.3"/><ellipse cx="6.2" cy="19.3" rx="2.8" ry="1.3"/><ellipse cx="13.2" cy="21" rx="2.8" ry="1.3"/><ellipse cx="13.2" cy="19.3" rx="2.8" ry="1.3"/><ellipse cx="13.2" cy="17.6" rx="2.8" ry="1.3"/><ellipse cx="20.2" cy="21" rx="2.8" ry="1.3"/><ellipse cx="20.2" cy="19.3" rx="2.8" ry="1.3"/><ellipse cx="20.2" cy="17.6" rx="2.8" ry="1.3"/><ellipse cx="20.2" cy="15.9" rx="2.8" ry="1.3"/><ellipse cx="20.2" cy="14.2" rx="2.8" ry="1.3"/></g></g>
<g transform="translate(747,1318.3)"><rect x="0.5" y="2" width="18.5" height="15" rx="1.2" fill="#f4f8fb" stroke="#c2c6cc" stroke-width="1"/><rect x="0" y="1.6" width="19.5" height="5.6" rx="1.4" fill="#1b78bd"/><rect x="4" y="0" width="2.6" height="5.4" rx="1.3" fill="#cfc8cc"/><rect x="12.8" y="0" width="2.6" height="5.4" rx="1.3" fill="#cfc8cc"/><path d="M2 9.300h16M2 12.700h16M5.500 7.500v9M9.300 7.500v9M13 7.500v9M16.500 7.500v9" stroke="#b9d3e4" stroke-width="1.6"/><rect x="3.7" y="9.3" width="5" height="5" fill="#ff3b3b"/><rect x="5.4" y="11" width="1.6" height="1.6" fill="#fff"/><g fill="#e6d21e" stroke="#8a7a10" stroke-width="0.7"><ellipse cx="6.2" cy="21" rx="2.8" ry="1.3"/><ellipse cx="6.2" cy="19.3" rx="2.8" ry="1.3"/><ellipse cx="13.2" cy="21" rx="2.8" ry="1.3"/><ellipse cx="13.2" cy="19.3" rx="2.8" ry="1.3"/><ellipse cx="13.2" cy="17.6" rx="2.8" ry="1.3"/><ellipse cx="20.2" cy="21" rx="2.8" ry="1.3"/><ellipse cx="20.2" cy="19.3" rx="2.8" ry="1.3"/><ellipse cx="20.2" cy="17.6" rx="2.8" ry="1.3"/><ellipse cx="20.2" cy="15.9" rx="2.8" ry="1.3"/><ellipse cx="20.2" cy="14.2" rx="2.8" ry="1.3"/></g></g>
<g transform="translate(1155,1318.3)"><rect x="0.5" y="2" width="18.5" height="15" rx="1.2" fill="#f4f8fb" stroke="#c2c6cc" stroke-width="1"/><rect x="0" y="1.6" width="19.5" height="5.6" rx="1.4" fill="#1b78bd"/><rect x="4" y="0" width="2.6" height="5.4" rx="1.3" fill="#cfc8cc"/><rect x="12.8" y="0" width="2.6" height="5.4" rx="1.3" fill="#cfc8cc"/><path d="M2 9.300h16M2 12.700h16M5.500 7.500v9M9.300 7.500v9M13 7.500v9M16.500 7.500v9" stroke="#b9d3e4" stroke-width="1.6"/><rect x="3.7" y="9.3" width="5" height="5" fill="#ff3b3b"/><rect x="5.4" y="11" width="1.6" height="1.6" fill="#fff"/><g fill="#e6d21e" stroke="#8a7a10" stroke-width="0.7"><ellipse cx="6.2" cy="21" rx="2.8" ry="1.3"/><ellipse cx="6.2" cy="19.3" rx="2.8" ry="1.3"/><ellipse cx="13.2" cy="21" rx="2.8" ry="1.3"/><ellipse cx="13.2" cy="19.3" rx="2.8" ry="1.3"/><ellipse cx="13.2" cy="17.6" rx="2.8" ry="1.3"/><ellipse cx="20.2" cy="21" rx="2.8" ry="1.3"/><ellipse cx="20.2" cy="19.3" rx="2.8" ry="1.3"/><ellipse cx="20.2" cy="17.6" rx="2.8" ry="1.3"/><ellipse cx="20.2" cy="15.9" rx="2.8" ry="1.3"/><ellipse cx="20.2" cy="14.2" rx="2.8" ry="1.3"/></g></g>
<g transform="translate(1547,1318.3)"><rect x="0.5" y="2" width="18.5" height="15" rx="1.2" fill="#f4f8fb" stroke="#c2c6cc" stroke-width="1"/><rect x="0" y="1.6" width="19.5" height="5.6" rx="1.4" fill="#1b78bd"/><rect x="4" y="0" width="2.6" height="5.4" rx="1.3" fill="#cfc8cc"/><rect x="12.8" y="0" width="2.6" height="5.4" rx="1.3" fill="#cfc8cc"/><path d="M2 9.300h16M2 12.700h16M5.500 7.500v9M9.300 7.500v9M13 7.500v9M16.500 7.500v9" stroke="#b9d3e4" stroke-width="1.6"/><rect x="3.7" y="9.3" width="5" height="5" fill="#ff3b3b"/><rect x="5.4" y="11" width="1.6" height="1.6" fill="#fff"/><g fill="#e6d21e" stroke="#8a7a10" stroke-width="0.7"><ellipse cx="6.2" cy="21" rx="2.8" ry="1.3"/><ellipse cx="6.2" cy="19.3" rx="2.8" ry="1.3"/><ellipse cx="13.2" cy="21" rx="2.8" ry="1.3"/><ellipse cx="13.2" cy="19.3" rx="2.8" ry="1.3"/><ellipse cx="13.2" cy="17.6" rx="2.8" ry="1.3"/><ellipse cx="20.2" cy="21" rx="2.8" ry="1.3"/><ellipse cx="20.2" cy="19.3" rx="2.8" ry="1.3"/><ellipse cx="20.2" cy="17.6" rx="2.8" ry="1.3"/><ellipse cx="20.2" cy="15.9" rx="2.8" ry="1.3"/><ellipse cx="20.2" cy="14.2" rx="2.8" ry="1.3"/></g></g>
<g transform="translate(1962,1318.3)"><rect x="0.5" y="2" width="18.5" height="15" rx="1.2" fill="#f4f8fb" stroke="#c2c6cc" stroke-width="1"/><rect x="0" y="1.6" width="19.5" height="5.6" rx="1.4" fill="#1b78bd"/><rect x="4" y="0" width="2.6" height="5.4" rx="1.3" fill="#cfc8cc"/><rect x="12.8" y="0" width="2.6" height="5.4" rx="1.3" fill="#cfc8cc"/><path d="M2 9.300h16M2 12.700h16M5.500 7.500v9M9.300 7.500v9M13 7.500v9M16.500 7.500v9" stroke="#b9d3e4" stroke-width="1.6"/><rect x="3.7" y="9.3" width="5" height="5" fill="#ff3b3b"/><rect x="5.4" y="11" width="1.6" height="1.6" fill="#fff"/><g fill="#e6d21e" stroke="#8a7a10" stroke-width="0.7"><ellipse cx="6.2" cy="21" rx="2.8" ry="1.3"/><ellipse cx="6.2" cy="19.3" rx="2.8" ry="1.3"/><ellipse cx="13.2" cy="21" rx="2.8" ry="1.3"/><ellipse cx="13.2" cy="19.3" rx="2.8" ry="1.3"/><ellipse cx="13.2" cy="17.6" rx="2.8" ry="1.3"/><ellipse cx="20.2" cy="21" rx="2.8" ry="1.3"/><ellipse cx="20.2" cy="19.3" rx="2.8" ry="1.3"/><ellipse cx="20.2" cy="17.6" rx="2.8" ry="1.3"/><ellipse cx="20.2" cy="15.9" rx="2.8" ry="1.3"/><ellipse cx="20.2" cy="14.2" rx="2.8" ry="1.3"/></g></g>
<rect x="2338.8" y="1319" width="19.2" height="19.2" rx="2" fill="#fbfbfb" stroke="#8f9eab" stroke-width="1.5"/>
<text x="2348.4" y="1335" font-family='"Liberation Serif", serif' font-size="19" font-weight="bold" fill="#7f8d99" text-anchor="middle">i</text>
<path d="M18 1386.2h5V1390h-5zM27 1382.2h5V1390h-5zM65 1384.2h5V1390h-5zM106 1382.2h5V1390h-5zM113 1382.2h5V1390h-5zM121 1382.2h5V1390h-5zM128 1384.2h5V1390h-5zM144 1375.8h5V1390h-5zM176 1373.9h5V1390h-5zM198 1386.2h5V1390h-5zM214 1379.2h5V1390h-5zM223 1381.2h5V1390h-5zM293 1353.3h5V1390h-5zM309 1360.3h5V1390h-5zM317 1367.3h5V1390h-5zM324 1368.3h5V1390h-5zM333 1370.3h5V1390h-5zM340 1374.3h5V1390h-5zM363 1361.3h5V1390h-5zM372 1360.3h5V1390h-5zM379 1354.3h5V1390h-5zM394 1370.3h5V1390h-5zM410 1372.3h5V1390h-5zM426 1372.3h5V1390h-5zM435 1354.3h5V1390h-5zM458 1374.4h5V1390h-5zM489 1383.5h5V1390h-5zM513 1378.6h5V1390h-5zM520 1381.6h5V1390h-5zM529 1383.5h5V1390h-5zM536 1383.5h5V1390h-5zM561 1366.5h5V1390h-5zM575 1362.7h5V1390h-5zM583 1369.8h5V1390h-5zM615 1383.5h5V1390h-5zM622 1374.4h5V1390h-5zM662 1378.6h5V1390h-5zM678 1373.6h5V1390h-5zM694 1348.7h5V1390h-5zM701 1360.7h5V1390h-5zM709 1364.9h5V1390h-5zM741 1373.6h5V1390h-5zM748 1364.9h5V1390h-5zM757 1353.9h5V1390h-5zM764 1366.5h5V1390h-5zM772 1366.5h5V1390h-5zM795 1376.6h5V1390h-5zM811 1380.8h5V1390h-5zM827 1376.6h5V1390h-5zM842 1364.9h5V1390h-5zM858 1381.6h5V1390h-5zM865 1380.8h5V1390h-5zM874 1378.6h5V1390h-5zM881 1381.6h5V1390h-5zM890 1376.6h5V1390h-5zM912 1381.6h5V1390h-5zM937 1381.6h5V1390h-5zM960 1369.8h5V1390h-5zM968 1380.8h5V1390h-5zM984 1376.6h5V1390h-5zM991 1371.7h5V1390h-5zM1000 1380.8h5V1390h-5zM1023 1380.8h5V1390h-5zM1045 1380.8h5V1390h-5zM1054 1378.6h5V1390h-5zM1070 1380.8h5V1390h-5zM1077 1381.6h5V1390h-5zM1101 1346.8h5V1390h-5zM1108 1362.7h5V1390h-5zM1117 1378.6h5V1390h-5zM1133 1373.6h5V1390h-5zM1140 1381.6h5V1390h-5zM1156 1376.6h5V1390h-5zM1164 1360.7h5V1390h-5zM1171 1376.6h5V1390h-5zM1180 1378.6h5V1390h-5zM1187 1378.6h5V1390h-5zM1219 1380.8h5V1390h-5zM1250 1378.6h5V1390h-5zM1266 1380.8h5V1390h-5zM1282 1385.7h5V1390h-5zM1336 1380.8h5V1390h-5zM1345 1380.8h5V1390h-5zM1352 1381.6h5V1390h-5zM1360 1374.4h5V1390h-5zM1376 1385.7h5V1390h-5zM1392 1385.7h5V1390h-5zM1423 1385.7h5V1390h-5zM1439 1385.7h5V1390h-5zM1446 1385.7h5V1390h-5zM1453 1387.6h5V1390h-5zM1469 1387.6h5V1390h-5zM1478 1385.7h5V1390h-5zM1485 1381.6h5V1390h-5zM1500 1385.7h5V1390h-5zM1509 1381.6h5V1390h-5zM1532 1385.7h5V1390h-5zM1541 1383.5h5V1390h-5zM1556 1374.4h5V1390h-5zM1563 1380.8h5V1390h-5zM1611 1387.6h5V1390h-5zM1642 1378.6h5V1390h-5zM1651 1381.6h5V1390h-5zM1658 1380.8h5V1390h-5zM1689 1387.6h5V1390h-5zM1697 1385.7h5V1390h-5zM1705 1381.6h5V1390h-5zM1712 1385.7h5V1390h-5zM1721 1383.5h5V1390h-5zM1728 1381.6h5V1390h-5zM1760 1387.6h5V1390h-5zM1775 1381.6h5V1390h-5zM1831 1378.6h5V1390h-5zM1847 1381.6h5V1390h-5zM1863 1383.5h5V1390h-5zM1870 1385.7h5V1390h-5zM1893 1383.5h5V1390h-5zM1901 1385.7h5V1390h-5zM1908 1381.6h5V1390h-5zM1917 1373.6h5V1390h-5zM1924 1381.6h5V1390h-5zM1933 1380.8h5V1390h-5zM1940 1381.6h5V1390h-5zM1955 1380.8h5V1390h-5zM1964 1369.8h5V1390h-5zM1971 1369.8h5V1390h-5zM1987 1380.8h5V1390h-5zM1996 1373.6h5V1390h-5zM2018 1383.5h5V1390h-5zM2050 1385.7h5V1390h-5zM2059 1383.5h5V1390h-5zM2066 1385.7h5V1390h-5zM2074 1381.6h5V1390h-5zM2097 1387.6h5V1390h-5zM2106 1387.6h5V1390h-5zM2113 1383.5h5V1390h-5zM2129 1385.7h5V1390h-5zM2145 1383.5h5V1390h-5zM2167 1387.6h5V1390h-5zM2199 1385.7h5V1390h-5zM2208 1385.7h5V1390h-5zM2246 1388.4h5V1390h-5zM2255 1387.6h5V1390h-5zM2271 1381.6h5V1390h-5zM2286 1383.5h5V1390h-5zM2293 1383.5h5V1390h-5zM2302 1381.6h5V1390h-5zM2309 1381.6h5V1390h-5zM2318 1360.7h5V1390h-5zM2325 1366.5h5V1390h-5zM2347 1380.8h5V1390h-5z" fill="#50d050"/>
<path d="M34 1386.2h5V1390h-5zM43 1386.2h5V1390h-5zM50 1384.2h5V1390h-5zM58 1384.2h5V1390h-5zM74 1386.2h5V1390h-5zM81 1381.2h5V1390h-5zM90 1384.2h5V1390h-5zM97 1382.2h5V1390h-5zM135 1384.2h5V1390h-5zM151 1373.9h5V1390h-5zM160 1381.2h5V1390h-5zM167 1371.9h5V1390h-5zM183 1369.9h5V1390h-5zM191 1371.9h5V1390h-5zM207 1384.2h5V1390h-5zM230 1374.3h5V1390h-5zM239 1379.2h5V1390h-5zM246 1372.3h5V1390h-5zM254 1372.3h5V1390h-5zM261 1351.3h5V1390h-5zM270 1351.3h5V1390h-5zM277 1358.3h5V1390h-5zM286 1353.3h5V1390h-5zM302 1361.3h5V1390h-5zM347 1360.3h5V1390h-5zM356 1370.3h5V1390h-5zM387 1370.3h5V1390h-5zM403 1377.2h5V1390h-5zM419 1377.2h5V1390h-5zM442 1377.2h5V1390h-5zM450 1381.2h5V1390h-5zM466 1381.6h5V1390h-5zM473 1378.6h5V1390h-5zM482 1380.8h5V1390h-5zM498 1371.7h5V1390h-5zM505 1378.6h5V1390h-5zM545 1378.6h5V1390h-5zM552 1374.4h5V1390h-5zM568 1373.6h5V1390h-5zM590 1378.6h5V1390h-5zM599 1369.8h5V1390h-5zM607 1380.8h5V1390h-5zM631 1374.4h5V1390h-5zM638 1381.6h5V1390h-5zM646 1371.7h5V1390h-5zM653 1373.6h5V1390h-5zM669 1369.8h5V1390h-5zM685 1360.7h5V1390h-5zM716 1374.4h5V1390h-5zM725 1374.4h5V1390h-5zM732 1376.6h5V1390h-5zM779 1366.5h5V1390h-5zM786 1373.6h5V1390h-5zM802 1376.6h5V1390h-5zM818 1381.6h5V1390h-5zM834 1380.8h5V1390h-5zM849 1373.6h5V1390h-5zM897 1373.6h5V1390h-5zM905 1380.8h5V1390h-5zM921 1380.8h5V1390h-5zM929 1381.6h5V1390h-5zM944 1376.6h5V1390h-5zM953 1380.8h5V1390h-5zM975 1380.8h5V1390h-5zM1007 1373.6h5V1390h-5zM1014 1381.6h5V1390h-5zM1030 1383.5h5V1390h-5zM1038 1385.7h5V1390h-5zM1061 1381.6h5V1390h-5zM1086 1374.4h5V1390h-5zM1093 1371.7h5V1390h-5zM1124 1374.4h5V1390h-5zM1149 1381.6h5V1390h-5zM1196 1381.6h5V1390h-5zM1203 1380.8h5V1390h-5zM1212 1369.8h5V1390h-5zM1227 1380.8h5V1390h-5zM1234 1380.8h5V1390h-5zM1241 1380.8h5V1390h-5zM1257 1380.8h5V1390h-5zM1273 1380.8h5V1390h-5zM1289 1385.7h5V1390h-5zM1297 1378.6h5V1390h-5zM1304 1381.6h5V1390h-5zM1313 1381.6h5V1390h-5zM1320 1376.6h5V1390h-5zM1329 1376.6h5V1390h-5zM1367 1373.6h5V1390h-5zM1383 1385.7h5V1390h-5zM1399 1383.5h5V1390h-5zM1408 1385.7h5V1390h-5zM1415 1381.6h5V1390h-5zM1430 1387.6h5V1390h-5zM1462 1387.6h5V1390h-5zM1493 1387.6h5V1390h-5zM1516 1378.6h5V1390h-5zM1525 1385.7h5V1390h-5zM1548 1380.8h5V1390h-5zM1572 1383.5h5V1390h-5zM1579 1383.5h5V1390h-5zM1588 1383.5h5V1390h-5zM1595 1383.5h5V1390h-5zM1604 1380.8h5V1390h-5zM1619 1385.7h5V1390h-5zM1626 1383.5h5V1390h-5zM1635 1383.5h5V1390h-5zM1667 1383.5h5V1390h-5zM1674 1383.5h5V1390h-5zM1681 1385.7h5V1390h-5zM1737 1385.7h5V1390h-5zM1744 1385.7h5V1390h-5zM1753 1385.7h5V1390h-5zM1768 1387.6h5V1390h-5zM1784 1385.7h5V1390h-5zM1791 1381.6h5V1390h-5zM1800 1385.7h5V1390h-5zM1807 1381.6h5V1390h-5zM1815 1381.6h5V1390h-5zM1822 1376.6h5V1390h-5zM1838 1385.7h5V1390h-5zM1854 1385.7h5V1390h-5zM1878 1383.5h5V1390h-5zM1885 1383.5h5V1390h-5zM1948 1381.6h5V1390h-5zM1980 1381.6h5V1390h-5zM2003 1383.5h5V1390h-5zM2011 1381.6h5V1390h-5zM2027 1385.7h5V1390h-5zM2035 1385.7h5V1390h-5zM2043 1387.6h5V1390h-5zM2081 1383.5h5V1390h-5zM2090 1385.7h5V1390h-5zM2120 1387.6h5V1390h-5zM2136 1385.7h5V1390h-5zM2152 1387.6h5V1390h-5zM2160 1387.6h5V1390h-5zM2176 1388.4h5V1390h-5zM2183 1383.5h5V1390h-5zM2192 1378.6h5V1390h-5zM2215 1380.8h5V1390h-5zM2223 1383.5h5V1390h-5zM2230 1385.7h5V1390h-5zM2239 1383.5h5V1390h-5zM2262 1380.8h5V1390h-5zM2278 1380.8h5V1390h-5zM2332 1376.6h5V1390h-5zM2340 1378.6h5V1390h-5z" fill="#e06262"/>
<g clip-path="url(#cpRsi)">
<polyline points="261.1,1423.7 271.1,1432.7 279.1,1434.7 287.0,1439.3 295.0,1429.7 308.9,1429.3 316.9,1423.7 328.9,1419.7 352.8,1418.7 358.8,1419.7 368.7,1409.8 378.7,1404.8 398.6,1406.2 418.6,1404.8 426.5,1404.8 434.5,1401.4 442.5,1404.8 458.4,1405.4 480.0,1409.8 483.3,1410.7 490.2,1408.5 498.4,1412.6 505.2,1413.7 514.8,1412.6 521.7,1412.6 530.4,1410.4 536.8,1410.4 546.3,1412.6 561.4,1412.6 568.8,1413.7 576.5,1405.8 584.7,1405.8 599.8,1410.7 616.2,1410.7 623.7,1406.1 631.3,1408.3 639.6,1408.3 654.6,1412.6 671.1,1412.6 679.3,1410.4 686.7,1412.6 694.4,1406.1 702.6,1405.0 742.3,1405.0 758.2,1401.7 765.6,1401.4 773.3,1399.2 780.7,1403.9 787.6,1406.1 796.6,1403.9 804.0,1406.1 812.8,1403.6 835.5,1403.6 843.8,1401.7 852.0,1401.4 860.2,1399.2 867.6,1398.1 883.0,1398.1 890.4,1396.2 897.8,1401.4 906.8,1401.4 913.7,1399.2 922.7,1401.4 945.2,1401.4 953.4,1403.6 1040.3,1403.6 1046.6,1398.9 1054.8,1398.9 1063.1,1401.4 1078.1,1401.4 1086.9,1406.6 1093.2,1406.6 1102.8,1401.4 1110.5,1399.2 1120.1,1398.1 1126.0,1399.2 1134.3,1396.2 1141.7,1396.2 1150.2,1398.4 1173.5,1398.4 1181.7,1396.2 1197.3,1396.2 1204.7,1399.2 1212.4,1403.6 1219.8,1399.2 1228.3,1401.4 1235.7,1401.4 1243.9,1403.6 1252.1,1403.6 1259.0,1405.8 1267.8,1403.6 1282.3,1403.6 1290.5,1405.2 1298.7,1405.2 1307.0,1408.5 1315.2,1410.4 1322.0,1410.4 1330.3,1413.5 1337.7,1410.4 1345.3,1408.5 1353.6,1405.2 1361.8,1401.4 1393.3,1401.4 1401.5,1403.6 1408.9,1405.8 1415.2,1405.8 1424.8,1403.6 1432.5,1403.6 1440.7,1401.7 1448.1,1401.7 1455.0,1399.2 1463.2,1401.7 1470.9,1401.7 1478.3,1399.2 1486.0,1398.1 1494.7,1399.2 1501.6,1398.1 1510.4,1398.1 1518.0,1399.2 1526.3,1401.7 1533.7,1399.2 1541.3,1398.1 1549.6,1399.2 1564.6,1399.2 1573.7,1403.6 1581.1,1405.8 1589.3,1406.6 1596.7,1408.5 1604.4,1410.7 1611.2,1410.7 1620.8,1412.6 1628.5,1413.7 1636.5,1415.7 1644.1,1412.6 1652.4,1410.7 1660.0,1408.5 1668.3,1408.5 1675.1,1412.6 1690.7,1412.6 1699.0,1410.7 1706.6,1406.6 1714.0,1405.2 1722.3,1405.2 1729.1,1403.6 1737.3,1406.1 1740.0,1406.1 1760.6,1406.1 1769.6,1408.5 1777.0,1405.2 1785.2,1406.1 1792.6,1406.1 1801.1,1408.3 1808.5,1408.3 1816.8,1410.4 1823.6,1413.5 1840.1,1413.5 1848.8,1408.3 1855.7,1410.4 1864.7,1408.3 1871.6,1408.3 1880.4,1412.6 1887.5,1413.7 1894.3,1412.6 1903.1,1408.3 1910.0,1408.3 1918.2,1403.6 1925.6,1403.6 1934.6,1401.4 1940.9,1399.2 1950.5,1401.4 1957.4,1401.4 1965.6,1399.2 1973.0,1399.2 1981.2,1401.4 1988.6,1399.2 1996.9,1398.1 2004.5,1399.2 2012.8,1401.4 2044.3,1401.4 2051.7,1399.2 2059.4,1396.2 2074.4,1396.2 2083.5,1400.0 2091.7,1403.6 2099.1,1401.4 2107.3,1401.4 2114.7,1399.2 2129.3,1399.2 2137.5,1401.4 2145.7,1399.5 2153.4,1401.4 2177.2,1401.4 2184.6,1403.6 2192.3,1408.5 2200.5,1406.1 2208.8,1405.2 2216.4,1406.1 2224.6,1408.3 2232.1,1408.3 2240.3,1410.4 2247.7,1410.4 2255.9,1406.1 2263.0,1410.4 2271.8,1406.1 2278.7,1408.5 2287.4,1406.6 2295.1,1403.6 2303.3,1401.7 2310.7,1399.5 2318.4,1396.2 2325.3,1396.2 2332.9,1398.4 2348.6,1398.4" fill="none" stroke="#000" stroke-width="2" stroke-linejoin="round"/>
</g>
<rect x="13.8" y="93" width="2427.2" height="2" fill="#ff0000" fill-opacity="0.46"/>
<rect x="590" y="76.5" width="2" height="1364.5" fill="#ff0000" fill-opacity="0.46"/>
<rect x="13.8" y="1343" width="2501" height="2" fill="#3d63bb"/>
<rect x="13.8" y="1389.7" width="2501" height="2" fill="#3d63bb"/>
<rect x="13.8" y="1440" width="2435.5" height="2" fill="#3d63bb"/>
<rect x="2441" y="46" width="2" height="1395" fill="#3d63bb"/>
<text x="2455.4" y="1324.7" font-family='"Liberation Sans", Arial, sans-serif' font-size="18" font-weight="normal" fill="#000" text-anchor="start" >1.8</text>
<text x="2455.4" y="1256.6" font-family='"Liberation Sans", Arial, sans-serif' font-size="18" font-weight="bold" fill="#000" text-anchor="start" >2</text>
<text x="2455.4" y="1188.5" font-family='"Liberation Sans", Arial, sans-serif' font-size="18" font-weight="normal" fill="#000" text-anchor="start" >2.2</text>
<text x="2455.4" y="1120.4" font-family='"Liberation Sans", Arial, sans-serif' font-size="18" font-weight="normal" fill="#000" text-anchor="start" >2.4</text>
<text x="2455.4" y="1052.2" font-family='"Liberation Sans", Arial, sans-serif' font-size="18" font-weight="normal" fill="#000" text-anchor="start" >2.6</text>
<text x="2455.4" y="984.1" font-family='"Liberation Sans", Arial, sans-serif' font-size="18" font-weight="normal" fill="#000" text-anchor="start" >2.8</text>
<text x="2455.4" y="916.0" font-family='"Liberation Sans", Arial, sans-serif' font-size="18" font-weight="bold" fill="#000" text-anchor="start" >3</text>
<text x="2455.4" y="847.9" font-family='"Liberation Sans", Arial, sans-serif' font-size="18" font-weight="normal" fill="#000" text-anchor="start" >3.2</text>
<text x="2455.4" y="779.8" font-family='"Liberation Sans", Arial, sans-serif' font-size="18" font-weight="normal" fill="#000" text-anchor="start" >3.4</text>
<text x="2455.4" y="711.6" font-family='"Liberation Sans", Arial, sans-serif' font-size="18" font-weight="normal" fill="#000" text-anchor="start" >3.6</text>
<text x="2455.4" y="643.5" font-family='"Liberation Sans", Arial, sans-serif' font-size="18" font-weight="normal" fill="#000" text-anchor="start" >3.8</text>
<text x="2455.4" y="575.4" font-family='"Liberation Sans", Arial, sans-serif' font-size="18" font-weight="bold" fill="#000" text-anchor="start" >4</text>
<text x="2455.4" y="507.3" font-family='"Liberation Sans", Arial, sans-serif' font-size="18" font-weight="normal" fill="#000" text-anchor="start" >4.2</text>
<text x="2455.4" y="439.2" font-family='"Liberation Sans", Arial, sans-serif' font-size="18" font-weight="normal" fill="#000" text-anchor="start" >4.4</text>
<text x="2455.4" y="371.0" font-family='"Liberation Sans", Arial, sans-serif' font-size="18" font-weight="normal" fill="#000" text-anchor="start" >4.6</text>
<text x="2455.4" y="302.9" font-family='"Liberation Sans", Arial, sans-serif' font-size="18" font-weight="normal" fill="#000" text-anchor="start" >4.8</text>
<text x="2455.4" y="234.8" font-family='"Liberation Sans", Arial, sans-serif' font-size="18" font-weight="bold" fill="#000" text-anchor="start" >5</text>
<text x="2455.4" y="166.7" font-family='"Liberation Sans", Arial, sans-serif' font-size="18" font-weight="normal" fill="#000" text-anchor="start" >5.2</text>
<text x="2455.4" y="98.6" font-family='"Liberation Sans", Arial, sans-serif' font-size="18" font-weight="normal" fill="#000" text-anchor="start" >5.4</text>
<path d="M2443 1318.3h7v1.6h-7zM2443 1284.3h4v1.6h-4zM2443 1250.2h7v1.6h-7zM2443 1216.1h4v1.6h-4zM2443 1182.1h7v1.6h-7zM2443 1148.0h4v1.6h-4zM2443 1114.0h7v1.6h-7zM2443 1079.9h4v1.6h-4zM2443 1045.8h7v1.6h-7zM2443 1011.8h4v1.6h-4zM2443 977.7h7v1.6h-7zM2443 943.7h4v1.6h-4zM2443 909.6h7v1.6h-7zM2443 875.5h4v1.6h-4zM2443 841.5h7v1.6h-7zM2443 807.4h4v1.6h-4zM2443 773.4h7v1.6h-7zM2443 739.3h4v1.6h-4zM2443 705.2h7v1.6h-7zM2443 671.2h4v1.6h-4zM2443 637.1h7v1.6h-7zM2443 603.1h4v1.6h-4zM2443 569.0h7v1.6h-7zM2443 534.9h4v1.6h-4zM2443 500.9h7v1.6h-7zM2443 466.8h4v1.6h-4zM2443 432.8h7v1.6h-7zM2443 398.7h4v1.6h-4zM2443 364.6h7v1.6h-7zM2443 330.6h4v1.6h-4zM2443 296.5h7v1.6h-7zM2443 262.5h4v1.6h-4zM2443 228.4h7v1.6h-7zM2443 194.3h4v1.6h-4zM2443 160.3h7v1.6h-7zM2443 126.2h4v1.6h-4zM2443 92.2h7v1.6h-7zM2443 58.1h4v1.6h-4z" fill="#3d63bb"/>
<rect x="2443" y="92.8" width="7" height="2.2" fill="#000"/>
<rect x="2450.1" y="81.9" width="43.8" height="25.2" fill="#ffff1a" stroke="#4168c4" stroke-width="1.6"/>
<text x="2454.3" y="101.7" font-family='"Liberation Sans", Arial, sans-serif' font-size="18" font-weight="normal" fill="#000" text-anchor="start" >5.39</text>
<rect x="2443" y="421.3" width="7" height="2.2" fill="#000"/>
<defs><linearGradient id="gOr" x1="0" y1="0" x2="0" y2="1"><stop offset="0" stop-color="#ffee22"/><stop offset="1" stop-color="#f4c200"/></linearGradient></defs>
<rect x="2450.2" y="410" width="53.8" height="23.8" fill="url(#gOr)" stroke="#4168c4" stroke-width="1.8"/>
<text x="2454.3" y="429" font-family='"Liberation Sans", Arial, sans-serif' font-size="18" font-weight="normal" fill="#000" text-anchor="start"  textLength="47.6" lengthAdjust="spacing">4.435</text>
<rect x="2443" y="1355.2" width="7" height="1.6" fill="#3d63bb"/>
<text x="2455.4" y="1361.6" font-family='"Liberation Sans", Arial, sans-serif' font-size="18" font-weight="normal" fill="#000" text-anchor="start" >10M</text>
<rect x="2443" y="1380.2" width="7" height="1.8" fill="#44dd44"/>
<rect x="2450.1" y="1365.1" width="62" height="24" fill="url(#gLbl)" stroke="#3d63bb" stroke-width="1.6"/>
<text x="2454" y="1384.2" font-family='"Liberation Sans", Arial, sans-serif' font-size="18" font-weight="normal" fill="#3fdc3f" text-anchor="start"  textLength="56.5" lengthAdjust="spacing">3,210k</text>
<rect x="2443" y="1397" width="7" height="2" fill="#000"/>
<rect x="2450.1" y="1392.4" width="64" height="22.6" fill="url(#gLbl)" stroke="#3d63bb" stroke-width="1.6"/>
<text x="2454" y="1409.8" font-family='"Liberation Sans", Arial, sans-serif' font-size="18" font-weight="normal" fill="#000" text-anchor="start"  textLength="56.5" lengthAdjust="spacing">72.458</text>
<text x="2455.4" y="1436.3" font-family='"Liberation Sans", Arial, sans-serif' font-size="18" font-weight="bold" fill="#000" text-anchor="start" >10</text>
<text x="115.0" y="1464.3" font-family='"Liberation Sans", Arial, sans-serif' font-size="18" font-weight="normal" fill="#000" text-anchor="middle"  textLength="29.5" lengthAdjust="spacing">Oct</text>
<text x="215.0" y="1464.3" font-family='"Liberation Sans", Arial, sans-serif' font-size="18" font-weight="bold" fill="#000" text-anchor="middle"  textLength="47" lengthAdjust="spacingAndGlyphs">2020</text>
<text x="319.0" y="1464.3" font-family='"Liberation Sans", Arial, sans-serif' font-size="18" font-weight="normal" fill="#000" text-anchor="middle"  textLength="30" lengthAdjust="spacing">Apr</text>
<text x="421.0" y="1464.3" font-family='"Liberation Sans", Arial, sans-serif' font-size="18" font-weight="normal" fill="#000" text-anchor="middle"  textLength="23" lengthAdjust="spacing">Jul</text>
<text x="522.0" y="1464.3" font-family='"Liberation Sans", Arial, sans-serif' font-size="18" font-weight="normal" fill="#000" text-anchor="middle"  textLength="29.5" lengthAdjust="spacing">Oct</text>
<text x="623.0" y="1464.3" font-family='"Liberation Sans", Arial, sans-serif' font-size="18" font-weight="bold" fill="#000" text-anchor="middle"  textLength="47" lengthAdjust="spacingAndGlyphs">2021</text>
<text x="727.0" y="1464.3" font-family='"Liberation Sans", Arial, sans-serif' font-size="18" font-weight="normal" fill="#000" text-anchor="middle"  textLength="30" lengthAdjust="spacing">Apr</text>
<text x="829.0" y="1464.3" font-family='"Liberation Sans", Arial, sans-serif' font-size="18" font-weight="normal" fill="#000" text-anchor="middle"  textLength="23" lengthAdjust="spacing">Jul</text>
<text x="931.0" y="1464.3" font-family='"Liberation Sans", Arial, sans-serif' font-size="18" font-weight="normal" fill="#000" text-anchor="middle"  textLength="29.5" lengthAdjust="spacing">Oct</text>
<text x="1031.0" y="1464.3" font-family='"Liberation Sans", Arial, sans-serif' font-size="18" font-weight="bold" fill="#000" text-anchor="middle"  textLength="47" lengthAdjust="spacingAndGlyphs">2022</text>
<text x="1135.0" y="1464.3" font-family='"Liberation Sans", Arial, sans-serif' font-size="18" font-weight="normal" fill="#000" text-anchor="middle"  textLength="30" lengthAdjust="spacing">Apr</text>
<text x="1236.0" y="1464.3" font-family='"Liberation Sans", Arial, sans-serif' font-size="18" font-weight="normal" fill="#000" text-anchor="middle"  textLength="23" lengthAdjust="spacing">Jul</text>
<text x="1338.0" y="1464.3" font-family='"Liberation Sans", Arial, sans-serif' font-size="18" font-weight="normal" fill="#000" text-anchor="middle"  textLength="29.5" lengthAdjust="spacing">Oct</text>
<text x="1440.0" y="1464.3" font-family='"Liberation Sans", Arial, sans-serif' font-size="18" font-weight="bold" fill="#000" text-anchor="middle"  textLength="47" lengthAdjust="spacingAndGlyphs">2023</text>
<text x="1543.0" y="1464.3" font-family='"Liberation Sans", Arial, sans-serif' font-size="18" font-weight="normal" fill="#000" text-anchor="middle"  textLength="30" lengthAdjust="spacing">Apr</text>
<text x="1644.0" y="1464.3" font-family='"Liberation Sans", Arial, sans-serif' font-size="18" font-weight="normal" fill="#000" text-anchor="middle"  textLength="23" lengthAdjust="spacing">Jul</text>
<text x="1746.0" y="1464.3" font-family='"Liberation Sans", Arial, sans-serif' font-size="18" font-weight="normal" fill="#000" text-anchor="middle"  textLength="29.5" lengthAdjust="spacing">Oct</text>
<text x="1848.0" y="1464.3" font-family='"Liberation Sans", Arial, sans-serif' font-size="18" font-weight="bold" fill="#000" text-anchor="middle"  textLength="47" lengthAdjust="spacingAndGlyphs">2024</text>
<text x="1950.0" y="1464.3" font-family='"Liberation Sans", Arial, sans-serif' font-size="18" font-weight="normal" fill="#000" text-anchor="middle"  textLength="30" lengthAdjust="spacing">Apr</text>
<text x="2052.0" y="1464.3" font-family='"Liberation Sans", Arial, sans-serif' font-size="18" font-weight="normal" fill="#000" text-anchor="middle"  textLength="23" lengthAdjust="spacing">Jul</text>
<text x="2162.0" y="1464.3" font-family='"Liberation Sans", Arial, sans-serif' font-size="18" font-weight="normal" fill="#000" text-anchor="middle"  textLength="29.5" lengthAdjust="spacing">Oct</text>
<text x="2263.0" y="1464.3" font-family='"Liberation Sans", Arial, sans-serif' font-size="18" font-weight="bold" fill="#000" text-anchor="middle"  textLength="47" lengthAdjust="spacingAndGlyphs">2025</text>
<text x="2365.1" y="1464.3" font-family='"Liberation Sans", Arial, sans-serif' font-size="18" font-weight="normal" fill="#000" text-anchor="middle"  textLength="30" lengthAdjust="spacing">Apr</text>
<path d="M113.0 1442h2v4.5h-2zM214.0 1442h2v4.5h-2zM317.0 1442h2v4.5h-2zM419.0 1442h2v4.5h-2zM520.0 1442h2v4.5h-2zM622.0 1442h2v4.5h-2zM725.0 1442h2v4.5h-2zM827.0 1442h2v4.5h-2zM929.0 1442h2v4.5h-2zM1030.0 1442h2v4.5h-2zM1133.0 1442h2v4.5h-2zM1234.0 1442h2v4.5h-2zM1336.0 1442h2v4.5h-2zM1439.0 1442h2v4.5h-2zM1541.0 1442h2v4.5h-2zM1642.0 1442h2v4.5h-2zM1744.0 1442h2v4.5h-2zM1847.0 1442h2v4.5h-2zM1948.0 1442h2v4.5h-2zM2050.0 1442h2v4.5h-2zM2160.0 1442h2v4.5h-2zM2262.0 1442h2v4.5h-2zM2363.1 1442h2v4.5h-2z" fill="#3d63bb"/>
<rect x="590" y="1442" width="2" height="5" fill="#000"/>
<rect x="517.5" y="1446.5" width="148.5" height="23.5" fill="#ffff1a" stroke="#4f74cc" stroke-width="1.4"/>
<text x="591.5" y="1465.5" font-family='"Liberation Sans", Arial, sans-serif' font-size="18" font-weight="normal" fill="#000" text-anchor="middle"  textLength="143.9" lengthAdjust="spacing">7 Dec 2020 W50</text>
<text x="18.5" y="1340.5" font-family='"Liberation Sans", Arial, sans-serif' font-size="18" font-weight="normal" fill="#000" text-anchor="start"  textLength="263.4" lengthAdjust="spacing">ProRealTime.com - End of Day</text>
<rect x="14.3" y="1346.3" width="180.5" height="30" fill="#b1c9ff" stroke="#5c84dc" stroke-width="1.4"/>
<rect x="19.5" y="1353" width="9" height="17.5" fill="#50d050"/><rect x="28.5" y="1353" width="9" height="17.5" fill="#e06262"/>
<text x="43.3" y="1368.3" font-family='"Liberation Sans", Arial, sans-serif' font-size="18" font-weight="normal" fill="#000" text-anchor="start"  textLength="62.1" lengthAdjust="spacing">Volume</text>
<text x="116.5" y="1368.3" font-family='"Liberation Sans", Arial, sans-serif' font-size="18" font-weight="normal" fill="#e06262" text-anchor="start"  textLength="56.4" lengthAdjust="spacing">3,516k</text>
<rect x="14.3" y="1393.4" width="338" height="29.4" fill="#b1c9ff" stroke="#5c84dc" stroke-width="1.4"/>
<rect x="19.5" y="1400" width="18" height="17.5" fill="#000"/>
<text x="43.3" y="1415" font-family='"Liberation Sans", Arial, sans-serif' font-size="18" font-weight="normal" fill="#000" text-anchor="start"  textLength="233.2" lengthAdjust="spacing">Relative Strength Index (14)</text>
<text x="286" y="1415" font-family='"Liberation Sans", Arial, sans-serif' font-size="18" font-weight="normal" fill="#000" text-anchor="start"  textLength="57.2" lengthAdjust="spacing">45.568</text>
<rect x="0" y="44" width="12.2" height="1428" fill="#6a9aff"/>
<rect x="12" y="44" width="1.9" height="1428" fill="#4672c6"/>
<path d="M0 85l4 4-4 4" fill="none" stroke="#000" stroke-width="1.5"/>
<path d="M0 240l4-4M0 300h5M0 338v-8" stroke="#000" stroke-width="1.5" fill="none"/>
<path d="M0 347h4.5M2 343v8M0 493h4.5M0 836h4.5M2 832v8" stroke="#0000ee" stroke-width="1.5" fill="none"/>
<rect x="-4" y="684" width="11" height="46" rx="3" fill="#7391dc" stroke="#5a7fd0" stroke-width="1"/>
<path d="M0 846h3M0 1380h5M0 1388h4M0 1408l5-2.5M0 1452l4 2.5" stroke="#0" stroke-width="1.6" fill="none"/>
<rect x="0" y="0" width="2516" height="46" fill="url(#gTop)"/>
<rect x="0" y="0" width="2516" height="2" fill="#1d3f96"/>
<rect x="0" y="43.6" width="2516" height="2.6" fill="#3a61c2"/>
<rect x="2514.8" y="0" width="1.2" height="1516" fill="#2f55b0"/>
<rect x="3.6" y="2" width="1.8" height="42" fill="#4a76dc"/>
<rect x="36.5" y="2" width="1.8" height="42" fill="#4a76dc"/>
<rect x="120.5" y="2" width="1.8" height="42" fill="#4a76dc"/>
<rect x="225.6" y="2" width="1.8" height="42" fill="#4a76dc"/>
<rect x="349.40000000000003" y="2" width="1.8" height="42" fill="#4a76dc"/>
<rect x="508.8" y="2" width="1.8" height="42" fill="#4a76dc"/>
<rect x="2378.1" y="2" width="1.8" height="42" fill="#4a76dc"/>
<rect x="2419.7" y="2" width="1.8" height="42" fill="#4a76dc"/>
<g fill="none" stroke-linecap="round" stroke-linejoin="round"><rect x="16.2" y="28.2" width="9.6" height="10" rx="4.6" stroke="#6e6e6e" stroke-width="5.6"/><rect x="16.2" y="28.2" width="9.6" height="10" rx="4.6" stroke="#fff" stroke-width="3.2"/><rect x="16.3" y="11" width="10.2" height="8.6" rx="4.2" stroke="#6e6e6e" stroke-width="5.6"/><rect x="16.3" y="11" width="10.2" height="8.6" rx="4.2" stroke="#fff" stroke-width="3.2"/><path d="M21.5 18.6v11.4" stroke="#6e6e6e" stroke-width="5"/><path d="M21.5 18.6v11.4" stroke="#fff" stroke-width="2.6"/><path d="M21.5 13.5v4" stroke="#6e6e6e" stroke-width="5"/><path d="M21.5 14.5v4" stroke="#86a8f0" stroke-width="2.4"/><path d="M18.6 35l3.8 5.4 7.4-11.2" stroke="#fff" stroke-width="6.4"/><path d="M18.6 35l3.8 5.4 7.4-11.2" stroke="#1a56c8" stroke-width="3.7" stroke-linecap="butt"/></g>
<text x="44.4" y="27.7" font-family='"Liberation Sans", Arial, sans-serif' font-size="18" font-weight="bold" fill="#000" text-anchor="start"  textLength="39.3" lengthAdjust="spacing">NOS</text>
<polyline points="96.5,18.2 102.0,24.2 107.5,18.2" fill="none" stroke="#000" stroke-width="2.4" stroke-linecap="round" stroke-linejoin="round"/>
<text x="130.8" y="27.7" font-family='"Liberation Sans", Arial, sans-serif' font-size="18" font-weight="bold" fill="#000" text-anchor="start"  textLength="62" lengthAdjust="spacing">1 week</text>
<polyline points="206.5,18.2 212.0,24.2 217.5,18.2" fill="none" stroke="#000" stroke-width="2.4" stroke-linecap="round" stroke-linejoin="round"/>
<text x="235.9" y="27.7" font-family='"Liberation Sans", Arial, sans-serif' font-size="18" font-weight="bold" fill="#000" text-anchor="start"  textLength="82" lengthAdjust="spacing">300 units</text>
<polyline points="331.5,18.2 337.0,24.2 342.5,18.2" fill="none" stroke="#000" stroke-width="2.4" stroke-linecap="round" stroke-linejoin="round"/>
<g><path d="M363.5 21c4-13 9-15 13-6s8 17 12 8c2-4 5-9 8-13v12c-4 3-8 2-12-3s-8-7-12-5z" fill="#7fb7a8" fill-opacity="0.6"/><path d="M363.5 21c3-9 8-9 13-5s10 7 20 6" fill="none" stroke="#d63030" stroke-width="1.6"/><path d="M363.5 20c4-14 9-16 13-6s8 18 12 9c2-4 5-10 8-14" fill="none" stroke="#18a818" stroke-width="1.8"/><rect x="363.3" y="30" width="7" height="8.5" fill="#14c814"/><rect x="370.3" y="33.5" width="4.5" height="5" fill="#f06060"/><rect x="374.8" y="35" width="4.5" height="3.5" fill="#14c814"/><rect x="379.3" y="31.5" width="6" height="7" fill="#14c814"/><rect x="385.3" y="33.5" width="4.5" height="5" fill="#f06060"/><rect x="389.8" y="30" width="7" height="8.5" fill="#14c814"/><rect x="363.3" y="38.5" width="33.5" height="1.4" fill="#2a5ac8"/></g>
<text x="407.3" y="25.8" font-family='"Liberation Sans", Arial, sans-serif' font-size="18" font-weight="bold" fill="#000" text-anchor="start"  textLength="90.6" lengthAdjust="spacing">Indicators</text>
<polyline points="516.6,18.5 522.1,24.5 527.6,18.5" fill="none" stroke="#000" stroke-width="2.4" stroke-linecap="round" stroke-linejoin="round"/>
<rect x="548.2" y="13.3" width="18.6" height="18.6" rx="1.6" fill="#fdfdfd" stroke="#b4b8be" stroke-width="1.5"/>
<text x="557.5" y="29" font-family='"Liberation Serif", serif' font-size="19" font-weight="bold" fill="#8a929c" text-anchor="middle">i</text>
<text x="580" y="27.7" font-family='"Liberation Sans", Arial, sans-serif' font-size="18" font-weight="normal" fill="#000" text-anchor="start"  textLength="103.1" lengthAdjust="spacing">NOS, SGPS</text>
<text x="694.7" y="27.7" font-family='"Liberation Sans", Arial, sans-serif' font-size="18" font-weight="bold" fill="#0b8f0b" text-anchor="start"  textLength="46.8" lengthAdjust="spacing">4.435</text>
<rect x="752.2" y="9.4" width="77.8" height="26.4" rx="3" fill="#54e054" stroke="#47cf47" stroke-width="1"/>
<text x="756.9" y="27.7" font-family='"Liberation Sans", Arial, sans-serif' font-size="18" font-weight="normal" fill="#fff" text-anchor="start"  textLength="64.6" lengthAdjust="spacing">+1.14%</text>
<text x="837.5" y="27.7" font-family='"Liberation Sans", Arial, sans-serif' font-size="18" font-weight="bold" fill="#000" text-anchor="start"  textLength="110.3" lengthAdjust="spacing">28 Mar 2025</text>
<circle cx="969.2" cy="22" r="7" fill="#dbe5ff" stroke="#fff" stroke-width="3.4"/><circle cx="969.2" cy="22" r="7" fill="none" stroke="#777" stroke-width="1.8"/>
<g><path d="M2400 12c-7-1-11 3-10 10" fill="none" stroke="#f04848" stroke-width="4.2"/><path d="M2382 21h15l-7.5 9.5z" fill="#f04848"/><path d="M2393 33c8 3 14-1 14-10" fill="none" stroke="#10b010" stroke-width="4.6"/><path d="M2399.5 24l7.5-10.5 7.5 10.5z" fill="#10b010"/></g>
<rect x="2431" y="27.8" width="17" height="3" rx="1.5" fill="#4f78cc"/>
<g fill="none" stroke="#4f78cc" stroke-width="2.2"><path d="M2464 19v-4.2h11.2v11.2h-4"/><rect x="2460" y="19.3" width="11" height="11"/></g>
<path d="M2488.5 15.2l14 14.4M2502.5 15.2l-14 14.4" stroke="#4f78cc" stroke-width="2.8" stroke-linecap="round"/>
<rect x="13.8" y="46.2" width="732.6" height="29.6" fill="#b1c9ff"/>
<rect x="13.8" y="74.9" width="733.6" height="1.6" fill="#5580dc"/>
<rect x="12.6" y="45.6" width="734.8" height="1.4" fill="#4a72cc"/>
<rect x="12.6" y="45.6" width="1.6" height="31" fill="#4a72cc"/>
<rect x="72.39999999999999" y="46.2" width="1.8" height="30" fill="#5580dc"/>
<rect x="212.9" y="46.2" width="1.8" height="30" fill="#5580dc"/>
<rect x="246.1" y="46.2" width="1.8" height="30" fill="#5580dc"/>
<rect x="442.3" y="46.2" width="1.8" height="30" fill="#5580dc"/>
<rect x="560.1" y="46.2" width="1.8" height="30" fill="#5580dc"/>
<rect x="745.6" y="46.2" width="1.8" height="30" fill="#5580dc"/>
<path d="M18.6 49.6h15.5l5.5 5.5v14.6h-21z" fill="#f3f5f8" stroke="#8fa6be" stroke-width="1.7" stroke-linejoin="round"/><path d="M34.1 49.6v5.5h5.5" fill="#d5dde8" stroke="#8fa6be" stroke-width="1.2"/><path d="M27.400000000000002 52.5h3.6v6.5h5.2l-7 7.6-7-7.6h5.2z" fill="#ea2c2c"/>
<path d="M46.6 49.6h15.5l5.5 5.5v14.6h-21z" fill="#f3f5f8" stroke="#8fa6be" stroke-width="1.7" stroke-linejoin="round"/><path d="M62.1 49.6v5.5h5.5" fill="#d5dde8" stroke="#8fa6be" stroke-width="1.2"/><path d="M55.400000000000006 67h3.6v-6.5h5.2l-7-7.6-7 7.6h5.2z" fill="#18b418"/>
<rect x="80" y="52.2" width="9" height="17.6" fill="#50d050"/><rect x="89" y="52.2" width="9" height="17.6" fill="#e06262"/>
<text x="104.2" y="65.8" font-family='"Liberation Sans", Arial, sans-serif' font-size="18" font-weight="normal" fill="#000" text-anchor="start"  textLength="41.9" lengthAdjust="spacing">Price</text>
<text x="156.2" y="65.8" font-family='"Liberation Sans", Arial, sans-serif' font-size="18" font-weight="normal" fill="#000" text-anchor="start"  textLength="47.6" lengthAdjust="spacing">2.153</text>
<g fill="#000"><rect x="222" y="52.6" width="3.2" height="3.2" rx="0.8"/><rect x="222" y="58.8" width="3.2" height="3.2" rx="0.8"/><rect x="222" y="65" width="3.2" height="3.2" rx="0.8"/><rect x="227.4" y="53.3" width="12" height="1.9"/><rect x="227.4" y="59.5" width="12" height="1.9"/><rect x="227.4" y="65.7" width="12" height="1.9"/></g>
<rect x="254.2" y="52.2" width="16.8" height="17.6" fill="#fd3030"/>
<text x="277.3" y="65.8" font-family='"Liberation Sans", Arial, sans-serif' font-size="18" font-weight="normal" fill="#000" text-anchor="start"  textLength="89.7" lengthAdjust="spacing">EMA (200)</text>
<text x="377.4" y="65.8" font-family='"Liberation Sans", Arial, sans-serif' font-size="18" font-weight="normal" fill="#fd3030" text-anchor="start"  textLength="57.8" lengthAdjust="spacing">2.8342</text>
<rect x="450.2" y="52.9" width="14.8" height="15.8" fill="#b9cdfb" stroke="#7f8fb4" stroke-width="1.8"/>
<text x="473.5" y="65.8" font-family='"Liberation Sans", Arial, sans-serif' font-size="18" font-weight="normal" fill="#000" text-anchor="start"  textLength="79" lengthAdjust="spacing">EMA (14)</text>
<rect x="567" y="52.2" width="17" height="17.6" fill="#2344e0"/>
<text x="590.4" y="65.8" font-family='"Liberation Sans", Arial, sans-serif' font-size="18" font-weight="normal" fill="#000" text-anchor="start"  textLength="78.5" lengthAdjust="spacing">SMA (40)</text>
<text x="680.6" y="65.8" font-family='"Liberation Sans", Arial, sans-serif' font-size="18" font-weight="normal" fill="#2344e0" text-anchor="start"  textLength="57.8" lengthAdjust="spacing">2.2514</text>
<rect x="0" y="1470.5" width="2516" height="44" fill="#6697f8"/>
<rect x="0" y="1470.5" width="12.2" height="44" fill="#5f8be6"/><rect x="12" y="1470.5" width="1.9" height="44" fill="#4672c6"/>
<rect x="13.8" y="1470" width="2501" height="1.8" fill="#4f7ee4"/>
<rect x="0" y="1513.6" width="2516" height="2.6" fill="#0c1220"/>
<path d="M0 1490l4-3" stroke="#3a3a3a" stroke-width="2.4"/>
<g><path d="M40 1481l-17 10 17 11" fill="none" stroke="#fff" stroke-width="3.4"/><circle cx="40" cy="1481" r="5.2" fill="#fff"/><circle cx="23" cy="1491" r="5.2" fill="#fff"/><circle cx="40" cy="1502" r="5.2" fill="#fff"/><path d="M39 1501.5h13l-6.5 6z" fill="#000" stroke="#fff" stroke-width="1"/></g>
<rect x="58" y="1472" width="118" height="41.6" fill="url(#gBtn)"/>
<defs><linearGradient id="gBr1" x1="0" y1="0" x2="0" y2="1"><stop offset="0" stop-color="#1e63b4"/><stop offset="1" stop-color="#0f2a5c"/></linearGradient><linearGradient id="gBr2" x1="0" y1="0" x2="0" y2="1"><stop offset="0" stop-color="#9a9ca0"/><stop offset="1" stop-color="#55585e"/></linearGradient></defs>
<path d="M64.5 1477h13.5v4.8h-5v21.4h5v4.8h-13.5z" fill="url(#gBr1)"/>
<path d="M95.6 1477h-13.5v4.8h5v21.4h-5v4.8h13.5z" fill="url(#gBr2)"/>
<text x="106.9" y="1499.5" font-family='"Liberation Sans", Arial, sans-serif' font-size="18" font-weight="normal" fill="#000" text-anchor="start"  textLength="65" lengthAdjust="spacing">Analyze</text>
<path d="M186 1476h11l5 5v18h-16z" fill="#eef1f6" stroke="#c4cad4" stroke-width="1.2"/>
<path d="M194 1486h17.5a2 2 0 0 1 2 2v12a2 2 0 0 1-2 2h-9.5l-6 5.5v-5.500h-2a2 2 0 0 1-2-2v-12a2 2 0 0 1 2-2z" fill="#3f74d6"/>
<circle cx="198" cy="1494.3" r="1.6" fill="#fff"/><circle cx="203" cy="1494.3" r="1.6" fill="#fff"/><circle cx="208" cy="1494.3" r="1.6" fill="#fff"/>
<rect x="228" y="1478" width="21" height="18.5" rx="1.5" fill="#fff" stroke="#0d3fb4" stroke-width="2"/><rect x="228" y="1478" width="21" height="3.6" fill="#0d3fb4"/><path d="M230 1494l4.500-9" stroke="#10b010" stroke-width="1.8" fill="none"/><path d="M234.5 1485c3 0 3 9 6.500 9" stroke="#e02020" stroke-width="1.8" fill="none"/><path d="M241 1494l5.500-10" stroke="#10b010" stroke-width="1.8" fill="none"/>
<rect x="237" y="1488" width="21" height="18.5" rx="1.5" fill="#fff" stroke="#0d3fb4" stroke-width="2"/><rect x="237" y="1488" width="21" height="3.6" fill="#0d3fb4"/><path d="M239 1504l4.500-9" stroke="#10b010" stroke-width="1.8" fill="none"/><path d="M243.5 1495c3 0 3 9 6.500 9" stroke="#e02020" stroke-width="1.8" fill="none"/><path d="M250 1504l5.500-10" stroke="#10b010" stroke-width="1.8" fill="none"/>
<path d="M276.5 1486l-5 7.500 5 7.500M283.500 1486l-5 7.500 5 7.5" fill="none" stroke="#3a3d44" stroke-width="1.7"/>
<rect x="295.5" y="1480.3" width="1848" height="23.6" rx="4" fill="#6c9cf8" stroke="#4f7cdc" stroke-width="1.4"/>
<rect x="1438" y="1481" width="682" height="22.2" fill="url(#gScroll)" stroke="#4f7cdc" stroke-width="1"/>
<path d="M295.5 1484.300a4 4 0 0 1 4-4h21.500v23.600h-21.500a4 4 0 0 1-4-4z" fill="url(#gScroll)" stroke="#4f7cdc" stroke-width="1.2"/>
<path d="M2120.500 1480.300h19a4 4 0 0 1 4 4v15.600a4 4 0 0 1-4 4h-19z" fill="url(#gScroll)" stroke="#4f7cdc" stroke-width="1.2"/>
<path d="M311 1486.500l-5.500 5.600 5.500 5.600" fill="none" stroke="#000" stroke-width="2.6"/>
<path d="M2129.500 1486.500l5.500 5.600-5.500 5.600" fill="none" stroke="#000" stroke-width="2.6"/>
<g><rect x="2163.5" y="1481" width="27" height="23" rx="1.5" fill="#fff" stroke="#c8ccd2" stroke-width="1"/><rect x="2163.5" y="1481" width="27" height="6.5" fill="#2c86c8"/><rect x="2168.5" y="1476.5" width="3.400" height="7.5" rx="1.6" fill="#d4d0d0"/><rect x="2182" y="1476.5" width="3.400" height="7.5" rx="1.6" fill="#d4d0d0"/><path d="M2166 1492h22M2166 1497h22M2170.500 1488.500v14M2176 1488.500v14M2181.500 1488.500v14M2186.500 1488.500v14" stroke="#b8d0e0" stroke-width="1.2"/><rect x="2180.5" y="1492.5" width="5.5" height="5.5" fill="#fff" stroke="#f03030" stroke-width="1.8"/><path d="M2156.500 1500.500l11.500-9v5h12v8.500h-12v5z" fill="#35c435" stroke="#1f9a1f" stroke-width="1"/></g>
<path d="M2212.500 1488l10.500-9v5.500c9 0 13.500 5 13.500 11 0 5-3.500 8.500-9 9 4-2 5.500-4.500 5.500-7.500 0-4-3.500-6.500-10-6.500v5.500z" fill="#1d55d8"/>
<path d="M2281.500 1488l-10.500-9v5.500c-9 0-13.500 5-13.500 11 0 5 3.500 8.500 9 9-4-2-5.500-4.500-5.500-7.500 0-4 3.500-6.500 10-6.500v5.500z" fill="#5a8cf4"/>
<g><path d="M2307.500 1490v16M2323.500 1476v32" stroke="#157a15" stroke-width="1.6"/><path d="M2307.500 1490v16" stroke="#b02020" stroke-width="1.6"/><rect x="2302" y="1493.5" width="11" height="9.5" fill="#e86a6a" stroke="#b02020" stroke-width="1.2"/><rect x="2318" y="1480.5" width="11" height="22" fill="#4fd24f" stroke="#157a15" stroke-width="1.2"/><path d="M2306.500 1503l9-10.500c-1.500-3.500 0.500-7.500 5-7.500l-2 3.500 2.500 2.500 4-1.500c0.500 4-3 6.500-7 5.500l-8.500 10.500z" fill="#fff" stroke="#000" stroke-width="1.5" stroke-linejoin="round"/></g>
<defs><radialGradient id="gLens" cx="0.4" cy="0.35" r="0.7"><stop offset="0" stop-color="#ffffff"/><stop offset="1" stop-color="#9a9a9a"/></radialGradient></defs>
<path d="M2362 1496l11 10.5" stroke="#000" stroke-width="4.600" stroke-linecap="round"/><circle cx="2355" cy="1489" r="9.5" fill="url(#gLens)" stroke="#000" stroke-width="2"/>
<path d="M2372 1478.500v17M2368.500 1482l3.500-4 3.500 4M2368.500 1492l3.500 4 3.500-4M2344 1504.500h15M2347.500 1501l-4 3.500 4 3.500M2355.500 1501l4 3.500-4 3.5" fill="none" stroke="#1a3ee8" stroke-width="1.8"/>
<path d="M2407 1496l11 10.5" stroke="#000" stroke-width="4.600" stroke-linecap="round"/><circle cx="2401" cy="1489" r="9" fill="#fff" stroke="#000" stroke-width="2"/><rect x="2396" y="1487.5" width="10" height="3" fill="#1515e0"/>
<path d="M2452 1496l11 10.5" stroke="#000" stroke-width="4.600" stroke-linecap="round"/><circle cx="2446" cy="1489" r="9" fill="#fff" stroke="#000" stroke-width="2"/><rect x="2441" y="1487.5" width="10" height="3" fill="#1515e0"/><rect x="2444.5" y="1484" width="3" height="10" fill="#1515e0"/>
<rect x="2481" y="1480.5" width="30" height="11" rx="1" fill="#fff" stroke="#d0d0d0" stroke-width="1"/>
<g fill="#222"><rect x="2483.5" y="1483.5" width="4.200" height="4.600"/><rect x="2489" y="1483.5" width="4.200" height="4.600"/><rect x="2494.5" y="1483.5" width="4.200" height="4.600"/><rect x="2500" y="1483.5" width="4.200" height="4.600"/><rect x="2505.5" y="1483.5" width="3.600" height="4.600"/></g>
<path d="M2494.500 1494.500h4.500v6h4l-6.200 7-6.200-7h4z" fill="#1d5fd0"/>
<rect x="0" y="1516.200" width="2516" height="65.800" fill="url(#gTask)"/>
<path d="M10 1533c6 6 7 16-2 22c-4 2-8 1-10 0v-8c8-1 12-7 12-14z" fill="#f6a21e"/>
<path d="M-4 1574a11 11 0 0 1 4-21a13 13 0 0 1 24 2a10 10 0 0 1 1 19z" fill="#a9c4f0"/><path d="M-4 1574a11 11 0 0 1 2-13c8-3 24 3 29 13z" fill="#cfe0f8"/>
<text x="47.5" y="1550.4" font-family='"Liberation Sans", "DejaVu Sans", sans-serif' font-size="20" font-weight="normal" fill="#1e1e1e" text-anchor="start" >5°C</text>
<text x="47.5" y="1578.3" font-family='"Liberation Sans", "DejaVu Sans", sans-serif' font-size="20" font-weight="normal" fill="#5a5a5a" text-anchor="start" textLength="125" lengthAdjust="spacingAndGlyphs">Ger. Nublado</text>
<defs><linearGradient id="gWin" x1="0" y1="0" x2="1" y2="1"><stop offset="0" stop-color="#35c6f4"/><stop offset="1" stop-color="#0b68c8"/></linearGradient></defs>
<rect x="791" y="1539.5" width="19" height="19" fill="url(#gWin)"/><rect x="812.5" y="1539.5" width="19" height="19" fill="url(#gWin)"/><rect x="791" y="1561" width="19" height="19" fill="url(#gWin)"/><rect x="812.5" y="1561" width="19" height="19" fill="url(#gWin)"/>
<rect x="856.5" y="1531.5" width="381" height="70" rx="24" fill="#f4f4f7" stroke="#cfcfd4" stroke-width="1.4"/>
<circle cx="886" cy="1557" r="8.600" fill="none" stroke="#1e1e1e" stroke-width="2.600"/><path d="M892.500 1563.500l7 7" stroke="#1e1e1e" stroke-width="2.800" stroke-linecap="round"/>
<text x="920" y="1568.6" font-family='"Liberation Sans", "DejaVu Sans", sans-serif' font-size="21" font-weight="normal" fill="#5a5a5a" text-anchor="start" textLength="91" lengthAdjust="spacingAndGlyphs">Procurar</text>
<rect x="1275" y="1539.5" width="28" height="28" rx="2.5" fill="#f2f2f4" stroke="#d8d8dc" stroke-width="1"/><rect x="1260.5" y="1549.5" width="30" height="28" rx="2.5" fill="#2a2a2c"/>
<rect x="1338" y="1537" width="32" height="30" rx="4" fill="#e0e2e8"/>
<path d="M1343 1544v-4h4M1351 1540h4M1359 1540h4v4M1343 1550v4" fill="none" stroke="#e03c28" stroke-width="3"/>
<path d="M1353 1548l13 28M1378 1556l-22 6" stroke="#3a9ade" stroke-width="2.600" fill="none"/><circle cx="1367" cy="1578" r="3.600" fill="none" stroke="#3a9ade" stroke-width="2.400"/><circle cx="1379" cy="1555" r="3.600" fill="none" stroke="#3a9ade" stroke-width="2.400"/>
<path d="M1425 1546v-4a6 6 0 0 1 6-6h10a6 6 0 0 1 6 6v4" fill="none" stroke="#2b90e0" stroke-width="2.600"/>
<path d="M1416.500 1545h39.500v28a6 6 0 0 1-6 6h-27.500a6 6 0 0 1-6-6z" fill="#12408e"/>
<rect x="1426.5" y="1554" width="8.600" height="8.600" fill="#f25022"/><rect x="1437" y="1554" width="8.600" height="8.600" fill="#7fba00"/><rect x="1426.5" y="1564.5" width="8.600" height="8.600" fill="#00a4ef"/><rect x="1437" y="1564.5" width="8.600" height="8.600" fill="#ffb900"/>
<path d="M1491 1544a3 3 0 0 1 3-3h11l5 4.500h21.500a3 3 0 0 1 3 3v28.500h-43.500z" fill="#f0b41e"/>
<path d="M1491 1551h43.500v25a3 3 0 0 1-3 3h-37.500a3 3 0 0 1-3-3z" fill="#fcd04a"/>
<rect x="1501.5" y="1571" width="22.5" height="8" rx="2" fill="#1f78d0"/>
<circle cx="1589.5" cy="1561.5" r="21.5" fill="#e8e8e8"/>
<path d="M1589.500 1561.500L1570.880 1550.750A21.500 21.500 0 0 1 1608.120 1550.750z" fill="#e33b2e"/>
<path d="M1589.500 1561.500L1608.120 1550.750A21.500 21.500 0 0 1 1589.500 1583z" fill="#fcc31e"/>
<path d="M1589.500 1561.500L1589.500 1583A21.500 21.500 0 0 1 1570.880 1550.750z" fill="#2da94f"/>
<circle cx="1589.5" cy="1561.5" r="10" fill="#fff"/><circle cx="1589.5" cy="1561.5" r="7.800" fill="#3b7de8"/>
<circle cx="1604.5" cy="1542.5" r="14" fill="#2f86d6" stroke="#e8e8ee" stroke-width="1"/>
<text x="1604.5" y="1547.5" font-family='"Liberation Sans", "DejaVu Sans", sans-serif' font-size="14" font-weight="bold" fill="#e6f0ff" text-anchor="middle" >R</text>
<rect x="1649.5" y="1541.5" width="34.5" height="34" rx="4" fill="#06080c"/>
<g stroke="#4aa0f0" stroke-width="1.600"><path d="M1658.500 1556v14M1666.500 1552v14M1674.500 1546v14"/></g><g fill="#06080c" stroke="#4aa0f0" stroke-width="1.5"><rect x="1656.5" y="1560" width="4" height="6"/><rect x="1664.5" y="1556" width="4" height="6"/><rect x="1672.5" y="1549.5" width="4" height="7"/></g>
<path d="M2052 1564l9.500-10 9.500 10" fill="none" stroke="#1a1a1a" stroke-width="2.400"/>
<path d="M2109 1567a7.500 7.500 0 0 1 1-15a9.500 9.500 0 0 1 18 2.500a6.500 6.500 0 0 1-1 12.500z" fill="#8a8d92" stroke="#6c6f74" stroke-width="1.200"/>
<circle cx="2123" cy="1565.5" r="7.200" fill="#fff"/><path d="M2118.500 1565a4.600 4.600 0 0 1 8.200-2.600M2127.500 1566a4.600 4.600 0 0 1-8.200 2.600" fill="none" stroke="#1f78d8" stroke-width="1.800"/>
<text x="2164.5" y="1566.4" font-family='"Liberation Sans", "DejaVu Sans", sans-serif' font-size="19" font-weight="normal" fill="#1e1e1e" text-anchor="start" textLength="39" lengthAdjust="spacingAndGlyphs">POR</text>
<g fill="none" stroke="#1a1a1a" stroke-width="2.200" stroke-linecap="round"><path d="M2237.500 1553a19 19 0 0 1 26 0M2241.500 1558a13 13 0 0 1 18 0M2245.500 1562.500a7.500 7.500 0 0 1 10 0"/></g><circle cx="2250.5" cy="1566.5" r="2.200" fill="#1a1a1a"/>
<g fill="none" stroke="#1a1a1a" stroke-width="2" stroke-linejoin="round"><path d="M2278 1555h5.500l7-6v20l-7-6h-5.500z"/><path d="M2294.500 1554.500a6 6 0 0 1 0 9M2298.500 1551a11 11 0 0 1 0 16M2302.500 1547.500a16 16 0 0 1 0 23" stroke-linecap="round"/></g>
<g><rect x="2321" y="1549.5" width="22" height="16" rx="3" fill="none" stroke="#1a1a1a" stroke-width="2"/><rect x="2344.5" y="1554" width="2.5" height="7" rx="1" fill="#1a1a1a"/><rect x="2324" y="1552.5" width="9" height="10" fill="#1a1a1a"/><path d="M2322.500 1544l-3 8h4l-2.500 8" fill="none" stroke="#1a1a1a" stroke-width="2.200"/></g>
<text x="2484" y="1550.8" font-family='"Liberation Sans", "DejaVu Sans", sans-serif' font-size="19" font-weight="normal" fill="#1e1e1e" text-anchor="end"  textLength="49" lengthAdjust="spacing">21:39</text>
<text x="2484" y="1578.4" font-family='"Liberation Sans", "DejaVu Sans", sans-serif' font-size="19" font-weight="normal" fill="#1e1e1e" text-anchor="end"  textLength="106" lengthAdjust="spacing">29/03/2025</text>
</svg></body></html>
